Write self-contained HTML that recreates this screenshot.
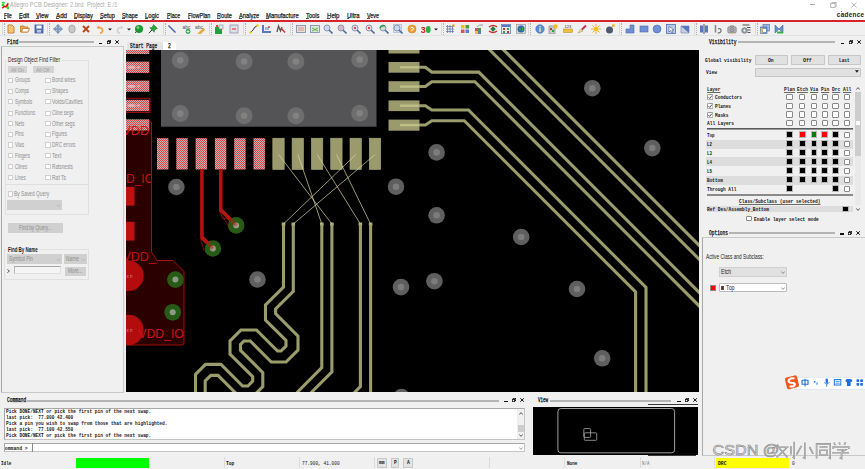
<!DOCTYPE html>
<html><head><meta charset="utf-8"><style>
*{margin:0;padding:0;box-sizing:border-box}
html,body{width:865px;height:469px;overflow:hidden;background:#f0f0f0;font-family:"Liberation Sans",sans-serif;position:relative}
.a{position:absolute}
.t{position:absolute;white-space:nowrap;line-height:1}
.mono{font-family:"Liberation Mono",monospace}
.serif{font-family:"Liberation Serif",serif}
.groove{position:absolute;height:3px;border-top:1px solid #a8a8a8;border-bottom:1px solid #fff;background:#d4d4d4}
.cb{position:absolute;width:6px;height:6px;border:1px solid #b4b4b4;background:#fff}
.btn{position:absolute;background:#dcdcdc;border:1px solid #c8c8c8}
</style></head>
<body>
<div class="a" style="left:0;top:0;width:865px;height:20px;background:#fff"></div>
<svg class="a" style="left:0.5px;top:1px" width="8.5" height="8.5" viewBox="0 0 8.5 8.5"><ellipse cx="2.3" cy="1.8" rx="1.6" ry="1" fill="#20e020"/><ellipse cx="2" cy="4" rx="1.4" ry="1.2" fill="#20e020"/><ellipse cx="7" cy="6.8" rx="1.3" ry="1.5" fill="#20e020"/><ellipse cx="6.5" cy="4.5" rx="1" ry="1.2" fill="#20e020"/><path d="M1.3 7.3L3.2 5.3L5 5.8L7.3 2.3" stroke="#e01010" stroke-width="1.6" fill="none"/></svg>
<svg class="a" style="left:10.40px;top:-2.00px;overflow:visible" width="77.4" height="12"><text x="0" y="9" font-size="6.6" font-family="Liberation Sans" fill="#ababab" textLength="73.40" lengthAdjust="spacingAndGlyphs" style="white-space:pre">Allegro PCB Designer: 2.brd</text></svg>
<svg class="a" style="left:87.40px;top:-2.00px;overflow:visible" width="34.4" height="12"><text x="0" y="9" font-size="6.6" font-family="Liberation Sans" fill="#ababab" textLength="30.40" lengthAdjust="spacingAndGlyphs" style="white-space:pre">Project: E:/1</text></svg>
<div class="a" style="left:810.2px;top:4.3px;width:4.8px;height:0.8px;background:#a8a8a8"></div>
<svg class="a" style="left:829.5px;top:1.8px" width="7" height="6" viewBox="0 0 7 6"><path d="M1.8 1.3V0.5H6.2V4.5H5.3" stroke="#a8a8a8" stroke-width="0.8" fill="none"/><rect x="0.7" y="1.5" width="4.4" height="4" fill="none" stroke="#a8a8a8" stroke-width="0.8"/></svg>
<svg class="a" style="left:850.5px;top:1.8px" width="6" height="6" viewBox="0 0 6 6"><path d="M0.5 0.5L5.5 5.5M5.5 0.5L0.5 5.5" stroke="#a8a8a8" stroke-width="0.8"/></svg>
<svg class="a" style="left:836px;top:9px;overflow:visible" width="28" height="10"><text x="0.8" y="7.6" font-size="6.4" font-family="Liberation Sans" font-weight="bold" fill="#1c1c1c" letter-spacing="0.3">cadence</text></svg>
<div class="a" style="left:841px;top:11.2px;width:1.4px;height:1.2px;background:#e83040"></div>
<svg class="a" style="left:3.90px;top:9.00px;overflow:visible" width="11.7" height="12"><text x="0" y="9" font-size="7.0" font-family="Liberation Sans" stroke="#1a1a1a" stroke-width="0.25" fill="#1a1a1a" textLength="7.70" lengthAdjust="spacingAndGlyphs" style="white-space:pre">File</text></svg>
<div class="a" style="left:3.9px;top:18.3px;width:2.0px;height:0.7px;background:#555"></div>
<svg class="a" style="left:19.20px;top:9.00px;overflow:visible" width="14.2" height="12"><text x="0" y="9" font-size="7.0" font-family="Liberation Sans" stroke="#1a1a1a" stroke-width="0.25" fill="#1a1a1a" textLength="10.20" lengthAdjust="spacingAndGlyphs" style="white-space:pre">Edit</text></svg>
<div class="a" style="left:19.2px;top:18.3px;width:2.7px;height:0.7px;background:#555"></div>
<svg class="a" style="left:36.30px;top:9.00px;overflow:visible" width="16.3" height="12"><text x="0" y="9" font-size="7.0" font-family="Liberation Sans" stroke="#1a1a1a" stroke-width="0.25" fill="#1a1a1a" textLength="12.30" lengthAdjust="spacingAndGlyphs" style="white-space:pre">View</text></svg>
<div class="a" style="left:36.3px;top:18.3px;width:3.2px;height:0.7px;background:#555"></div>
<svg class="a" style="left:55.50px;top:9.00px;overflow:visible" width="15.1" height="12"><text x="0" y="9" font-size="7.0" font-family="Liberation Sans" stroke="#1a1a1a" stroke-width="0.25" fill="#1a1a1a" textLength="11.10" lengthAdjust="spacingAndGlyphs" style="white-space:pre">Add</text></svg>
<div class="a" style="left:55.5px;top:18.3px;width:3.9px;height:0.7px;background:#555"></div>
<svg class="a" style="left:73.90px;top:9.00px;overflow:visible" width="22.9" height="12"><text x="0" y="9" font-size="7.0" font-family="Liberation Sans" stroke="#1a1a1a" stroke-width="0.25" fill="#1a1a1a" textLength="18.90" lengthAdjust="spacingAndGlyphs" style="white-space:pre">Display</text></svg>
<div class="a" style="left:73.9px;top:18.3px;width:2.8px;height:0.7px;background:#555"></div>
<svg class="a" style="left:99.80px;top:9.00px;overflow:visible" width="18.8" height="12"><text x="0" y="9" font-size="7.0" font-family="Liberation Sans" stroke="#1a1a1a" stroke-width="0.25" fill="#1a1a1a" textLength="14.80" lengthAdjust="spacingAndGlyphs" style="white-space:pre">Setup</text></svg>
<div class="a" style="left:99.8px;top:18.3px;width:3.1px;height:0.7px;background:#555"></div>
<svg class="a" style="left:122.00px;top:9.00px;overflow:visible" width="19.7" height="12"><text x="0" y="9" font-size="7.0" font-family="Liberation Sans" stroke="#1a1a1a" stroke-width="0.25" fill="#1a1a1a" textLength="15.70" lengthAdjust="spacingAndGlyphs" style="white-space:pre">Shape</text></svg>
<div class="a" style="left:122.0px;top:18.3px;width:3.3px;height:0.7px;background:#555"></div>
<svg class="a" style="left:145.20px;top:9.00px;overflow:visible" width="17.9" height="12"><text x="0" y="9" font-size="7.0" font-family="Liberation Sans" stroke="#1a1a1a" stroke-width="0.25" fill="#1a1a1a" textLength="13.90" lengthAdjust="spacingAndGlyphs" style="white-space:pre">Logic</text></svg>
<div class="a" style="left:145.2px;top:18.3px;width:2.9px;height:0.7px;background:#555"></div>
<svg class="a" style="left:166.80px;top:9.00px;overflow:visible" width="17.1" height="12"><text x="0" y="9" font-size="7.0" font-family="Liberation Sans" stroke="#1a1a1a" stroke-width="0.25" fill="#1a1a1a" textLength="13.10" lengthAdjust="spacingAndGlyphs" style="white-space:pre">Place</text></svg>
<div class="a" style="left:166.8px;top:18.3px;width:2.8px;height:0.7px;background:#555"></div>
<svg class="a" style="left:187.60px;top:9.00px;overflow:visible" width="26.4" height="12"><text x="0" y="9" font-size="7.0" font-family="Liberation Sans" stroke="#1a1a1a" stroke-width="0.25" fill="#1a1a1a" textLength="22.40" lengthAdjust="spacingAndGlyphs" style="white-space:pre">FlowPlan</text></svg>
<div class="a" style="left:187.6px;top:18.3px;width:2.9px;height:0.7px;background:#555"></div>
<svg class="a" style="left:216.90px;top:9.00px;overflow:visible" width="19.0" height="12"><text x="0" y="9" font-size="7.0" font-family="Liberation Sans" stroke="#1a1a1a" stroke-width="0.25" fill="#1a1a1a" textLength="15.00" lengthAdjust="spacingAndGlyphs" style="white-space:pre">Route</text></svg>
<div class="a" style="left:216.9px;top:18.3px;width:3.2px;height:0.7px;background:#555"></div>
<svg class="a" style="left:238.90px;top:9.00px;overflow:visible" width="24.3" height="12"><text x="0" y="9" font-size="7.0" font-family="Liberation Sans" stroke="#1a1a1a" stroke-width="0.25" fill="#1a1a1a" textLength="20.30" lengthAdjust="spacingAndGlyphs" style="white-space:pre">Analyze</text></svg>
<div class="a" style="left:238.9px;top:18.3px;width:3.0px;height:0.7px;background:#555"></div>
<svg class="a" style="left:266.10px;top:9.00px;overflow:visible" width="36.7" height="12"><text x="0" y="9" font-size="7.0" font-family="Liberation Sans" stroke="#1a1a1a" stroke-width="0.25" fill="#1a1a1a" textLength="32.70" lengthAdjust="spacingAndGlyphs" style="white-space:pre">Manufacture</text></svg>
<div class="a" style="left:266.1px;top:18.3px;width:3.1px;height:0.7px;background:#555"></div>
<svg class="a" style="left:306.20px;top:9.00px;overflow:visible" width="17.5" height="12"><text x="0" y="9" font-size="7.0" font-family="Liberation Sans" stroke="#1a1a1a" stroke-width="0.25" fill="#1a1a1a" textLength="13.50" lengthAdjust="spacingAndGlyphs" style="white-space:pre">Tools</text></svg>
<div class="a" style="left:306.2px;top:18.3px;width:2.8px;height:0.7px;background:#555"></div>
<svg class="a" style="left:326.60px;top:9.00px;overflow:visible" width="16.5" height="12"><text x="0" y="9" font-size="7.0" font-family="Liberation Sans" stroke="#1a1a1a" stroke-width="0.25" fill="#1a1a1a" textLength="12.50" lengthAdjust="spacingAndGlyphs" style="white-space:pre">Help</text></svg>
<div class="a" style="left:326.6px;top:18.3px;width:3.3px;height:0.7px;background:#555"></div>
<svg class="a" style="left:346.50px;top:9.00px;overflow:visible" width="16.6" height="12"><text x="0" y="9" font-size="7.0" font-family="Liberation Sans" stroke="#1a1a1a" stroke-width="0.25" fill="#1a1a1a" textLength="12.60" lengthAdjust="spacingAndGlyphs" style="white-space:pre">Ultra</text></svg>
<div class="a" style="left:346.5px;top:18.3px;width:2.6px;height:0.7px;background:#555"></div>
<svg class="a" style="left:366.50px;top:9.00px;overflow:visible" width="15.9" height="12"><text x="0" y="9" font-size="7.0" font-family="Liberation Sans" stroke="#1a1a1a" stroke-width="0.25" fill="#1a1a1a" textLength="11.90" lengthAdjust="spacingAndGlyphs" style="white-space:pre">Veve</text></svg>
<div class="a" style="left:366.5px;top:18.3px;width:3.1px;height:0.7px;background:#555"></div>
<div class="a" style="left:0;top:19.8px;width:865px;height:1.8px;background:#d8252a"></div>
<div class="a" style="left:0;top:35px;width:865px;height:1px;background:#e2e2e2"></div>
<div class="a" style="left:2px;top:23px;width:1px;height:12px;background:#dadada"></div><div class="a" style="left:4px;top:23px;width:1px;height:12px;border-left:1px dotted #b0b0b0"></div>
<div class="a" style="left:47px;top:23px;width:1px;height:12px;background:#dadada"></div><div class="a" style="left:49px;top:23px;width:1px;height:12px;border-left:1px dotted #b0b0b0"></div>
<div class="a" style="left:162.5px;top:23px;width:1px;height:12px;background:#dadada"></div><div class="a" style="left:164.5px;top:23px;width:1px;height:12px;border-left:1px dotted #b0b0b0"></div>
<div class="a" style="left:208.5px;top:23px;width:1px;height:12px;background:#dadada"></div><div class="a" style="left:210.5px;top:23px;width:1px;height:12px;border-left:1px dotted #b0b0b0"></div>
<div class="a" style="left:243px;top:23px;width:1px;height:12px;background:#dadada"></div><div class="a" style="left:245px;top:23px;width:1px;height:12px;border-left:1px dotted #b0b0b0"></div>
<div class="a" style="left:290px;top:23px;width:1px;height:12px;background:#dadada"></div><div class="a" style="left:292px;top:23px;width:1px;height:12px;border-left:1px dotted #b0b0b0"></div>
<div class="a" style="left:441px;top:23px;width:1px;height:12px;background:#dadada"></div><div class="a" style="left:443px;top:23px;width:1px;height:12px;border-left:1px dotted #b0b0b0"></div>
<div class="a" style="left:528px;top:23px;width:1px;height:12px;background:#dadada"></div><div class="a" style="left:530px;top:23px;width:1px;height:12px;border-left:1px dotted #b0b0b0"></div>
<div class="a" style="left:619px;top:23px;width:1px;height:12px;background:#dadada"></div><div class="a" style="left:621px;top:23px;width:1px;height:12px;border-left:1px dotted #b0b0b0"></div>
<div class="a" style="left:693.5px;top:23px;width:1px;height:12px;background:#dadada"></div><div class="a" style="left:695.5px;top:23px;width:1px;height:12px;border-left:1px dotted #b0b0b0"></div>
<div class="a" style="left:754.5px;top:23px;width:1px;height:12px;background:#dadada"></div><div class="a" style="left:756.5px;top:23px;width:1px;height:12px;border-left:1px dotted #b0b0b0"></div>
<svg class="a" style="left:5.8px;top:24px" width="10" height="10" viewBox="0 0 10 10"><path d="M2 1H6L8 3V9H2Z" fill="#f0c878" stroke="#c88838" stroke-width="1"/></svg>
<svg class="a" style="left:20.1px;top:24px" width="10" height="10" viewBox="0 0 10 10"><path d="M0.5 2H4L5 3H8V8H0.5Z" fill="#e8a850" stroke="#c07828" stroke-width="0.8"/><path d="M1.5 8L3 4.5H9.5L8 8Z" fill="#fff" stroke="#c07828" stroke-width="0.8"/></svg>
<svg class="a" style="left:34.0px;top:24px" width="10" height="10" viewBox="0 0 10 10"><rect x="1" y="1" width="8" height="8" fill="#5a78c0" stroke="#3a58a0" stroke-width="0.8"/><rect x="2.5" y="1.5" width="5" height="3" fill="#fff"/><rect x="3" y="6" width="4" height="2.5" fill="#c0c8e0"/></svg>
<svg class="a" style="left:53.1px;top:24px" width="10" height="10" viewBox="0 0 10 10"><path d="M5 0.3L7 2.6H5.8V4.2H7.4V3L9.7 5L7.4 7V5.8H5.8V7.4H7L5 9.7L3 7.4H4.2V5.8H2.6V7L0.3 5L2.6 3V4.2H4.2V2.6H3Z" fill="#7898c0" stroke="#5a7aa0" stroke-width="0.4"/></svg>
<svg class="a" style="left:67.0px;top:24px" width="10" height="10" viewBox="0 0 10 10"><ellipse cx="5" cy="5" rx="3.2" ry="4" fill="#c8c8c8" stroke="#a0a0a0" stroke-width="0.8"/></svg>
<svg class="a" style="left:80.8px;top:24px" width="10" height="10" viewBox="0 0 10 10"><path d="M2 2L8 8M8 2L2 8" stroke="#b84818" stroke-width="2"/></svg>
<svg class="a" style="left:94.7px;top:24px" width="10" height="10" viewBox="0 0 10 10"><path d="M3.5 3.5Q7.5 3.5 7.5 6.3Q7.5 8.8 5 9.3" stroke="#f0a040" stroke-width="1.6" fill="none"/><path d="M1.5 3.5L4.3 1.5V5.5Z" fill="#f0a040"/></svg>
<svg class="a" style="left:105.0px;top:24px" width="10" height="10" viewBox="0 0 10 10"><path d="M3 4.5H7L5 6.5Z" fill="#222"/></svg>
<svg class="a" style="left:114.6px;top:24px" width="10" height="10" viewBox="0 0 10 10"><path d="M6.5 3.5Q2.5 3.5 2.5 6.3Q2.5 8.8 5 9.3" stroke="#d0d0d0" stroke-width="1.6" fill="none"/><path d="M8.5 3.5L5.7 1.5V5.5Z" fill="#d0d0d0"/></svg>
<svg class="a" style="left:124.2px;top:24px" width="10" height="10" viewBox="0 0 10 10"><path d="M3 4.5H7L5 6.5Z" fill="#222"/></svg>
<svg class="a" style="left:133.7px;top:24px" width="10" height="10" viewBox="0 0 10 10"><circle cx="5" cy="5" r="4" fill="#1a9a30"/><circle cx="4" cy="3.5" r="1.5" fill="#70d070"/><path d="M1 9L3 7" stroke="#555" stroke-width="1"/></svg>
<svg class="a" style="left:148.0px;top:24px" width="10" height="10" viewBox="0 0 10 10"><path d="M5.5 0.5L9.5 4.5L8 5L6.5 6.5L6.3 8.3L1.7 3.7L3.5 3.5L5 2Z" fill="#30a040" stroke="#1a7a2a" stroke-width="0.5"/><path d="M4 6L0.8 9.2" stroke="#333" stroke-width="1"/></svg>
<svg class="a" style="left:167.1px;top:24px" width="10" height="10" viewBox="0 0 10 10"><path d="M1.5 1.5L8.5 8.5" stroke="#4868a8" stroke-width="1.5"/></svg>
<svg class="a" style="left:181.8px;top:24px" width="10" height="10" viewBox="0 0 10 10"><text x="0.5" y="4.5" font-size="5" fill="#505050" font-family="Liberation Sans">abc</text><circle cx="6" cy="7.5" r="2.4" fill="#20a040"/><path d="M6 6V9M4.5 7.5H7.5" stroke="#fff" stroke-width="0.8"/></svg>
<svg class="a" style="left:194.8px;top:24px" width="10" height="10" viewBox="0 0 10 10"><text x="0" y="4.5" font-size="5" fill="#505050" font-family="Liberation Sans">abc</text><path d="M3 9.5L8.3 4.2L9.8 5.7L4.5 11Z" fill="#f0b030" stroke="#c07020" stroke-width="0.4"/></svg>
<svg class="a" style="left:213.9px;top:24px" width="10" height="10" viewBox="0 0 10 10"><rect x="1" y="3" width="7" height="7" fill="#20a040"/><rect x="5" y="1" width="4" height="4" fill="#e8e8e8" stroke="#888" stroke-width="0.6"/><rect x="2" y="1" width="2" height="2" fill="#e04040"/></svg>
<svg class="a" style="left:228.6px;top:24px" width="10" height="10" viewBox="0 0 10 10"><rect x="1" y="1" width="8" height="8" fill="#e0e0e8" stroke="#9090b0" stroke-width="0.8"/><rect x="3" y="4" width="4" height="2" fill="#e08080"/></svg>
<svg class="a" style="left:248.6px;top:24px" width="10" height="10" viewBox="0 0 10 10"><path d="M1.5 8.5L4 6L6 3L8.5 1.5" stroke="#333" stroke-width="1" fill="none"/><circle cx="1.5" cy="8.5" r="1.3" fill="#e8d020"/><circle cx="8.5" cy="1.5" r="1.3" fill="#e8d020"/></svg>
<svg class="a" style="left:261.6px;top:24px" width="10" height="10" viewBox="0 0 10 10"><path d="M1 1V8H9" stroke="#5878c0" stroke-width="2" fill="none"/><rect x="3" y="3" width="4" height="3" fill="#a0b8e0"/><circle cx="7" cy="3" r="1" fill="#e04040"/></svg>
<svg class="a" style="left:276.3px;top:24px" width="10" height="10" viewBox="0 0 10 10"><path d="M1 8L2.5 2L4.5 7L6 3" stroke="#555" stroke-width="1.3" fill="none"/><path d="M5 4L9 8.5" stroke="#d03030" stroke-width="1.5"/></svg>
<svg class="a" style="left:295.6px;top:24px" width="10" height="10" viewBox="0 0 10 10"><rect x="0.5" y="1.5" width="9" height="7" fill="#e8e0d8" stroke="#7888a8" stroke-width="0.8"/><path d="M2 4H8M2 6H8" stroke="#d07070" stroke-width="0.7"/></svg>
<svg class="a" style="left:309.5px;top:24px" width="10" height="10" viewBox="0 0 10 10"><rect x="0.5" y="1.5" width="9" height="7" fill="#d8e8d0" stroke="#7888a8" stroke-width="0.8"/><path d="M2 4L8 7M2 7L8 4" stroke="#40a040" stroke-width="0.8"/></svg>
<svg class="a" style="left:323.3px;top:24px" width="10" height="10" viewBox="0 0 10 10"><circle cx="4" cy="4" r="3" fill="#c8d8f0" stroke="#8090b0" stroke-width="0.9"/><path d="M6 6L9.5 9.5" stroke="#5070a0" stroke-width="1.6"/></svg>
<svg class="a" style="left:337.2px;top:24px" width="10" height="10" viewBox="0 0 10 10"><circle cx="4" cy="4" r="3" fill="#d8b8c8" stroke="#8090b0" stroke-width="0.9"/><path d="M6 6L9.5 9.5" stroke="#5070a0" stroke-width="1.6"/></svg>
<svg class="a" style="left:351.1px;top:24px" width="10" height="10" viewBox="0 0 10 10"><circle cx="4" cy="4" r="3" fill="#e8d8e0" stroke="#8090b0" stroke-width="0.9"/><path d="M6 6L9.5 9.5" stroke="#5070a0" stroke-width="1.6"/><circle cx="4" cy="4" r="1" fill="#d02020"/></svg>
<svg class="a" style="left:365.0px;top:24px" width="10" height="10" viewBox="0 0 10 10"><circle cx="4" cy="4" r="3" fill="#e8d8e0" stroke="#8090b0" stroke-width="0.9"/><path d="M6 6L9.5 9.5" stroke="#5070a0" stroke-width="1.6"/><circle cx="4" cy="4" r="1" fill="#d02020"/></svg>
<svg class="a" style="left:378.8px;top:24px" width="10" height="10" viewBox="0 0 10 10"><circle cx="4" cy="4" r="3" fill="#d0d8d0" stroke="#8090b0" stroke-width="0.9"/><path d="M6 6L9.5 9.5" stroke="#5070a0" stroke-width="1.6"/><path d="M1 4Q2 1 6 2" stroke="#20a040" stroke-width="1.4" fill="none"/></svg>
<svg class="a" style="left:392.7px;top:24px" width="10" height="10" viewBox="0 0 10 10"><rect x="0.5" y="0.5" width="8" height="8" fill="#dde4f0" stroke="#7890b8" stroke-width="0.8" stroke-dasharray="1 1"/><circle cx="4" cy="4" r="3" fill="#c8d8f0" stroke="#8090b0" stroke-width="0.9"/><path d="M6 6L9.5 9.5" stroke="#5070a0" stroke-width="1.6"/></svg>
<svg class="a" style="left:406.6px;top:24px" width="10" height="10" viewBox="0 0 10 10"><circle cx="5" cy="5" r="4" fill="#f0a030" stroke="#d08020" stroke-width="0.6"/><path d="M3.5 4Q5 2.5 6.5 4Q6.5 6.5 4 6.5" stroke="#fff" stroke-width="1" fill="none"/></svg>
<svg class="a" style="left:421.3px;top:24px" width="10" height="10" viewBox="0 0 10 10"><text x="-0.5" y="9" font-size="9.5" font-weight="bold" fill="#d02020" font-family="Liberation Sans">3</text><rect x="5" y="2" width="4.5" height="7" rx="2" fill="#30b040"/></svg>
<svg class="a" style="left:431.1px;top:24px" width="10" height="10" viewBox="0 0 10 10"><path d="M3 4.5H7L5 6.5Z" fill="#222"/></svg>
<svg class="a" style="left:445.0px;top:24px" width="10" height="10" viewBox="0 0 10 10"><path d="M1 2.5H9M1 5H9M1 7.5H9M2.5 1V9M5 1V9M7.5 1V9" stroke="#6878b8" stroke-width="0.8"/><circle cx="8.5" cy="1.5" r="1.3" fill="#f0a030"/></svg>
<svg class="a" style="left:459.7px;top:24px" width="10" height="10" viewBox="0 0 10 10"><rect x="1" y="1" width="3.5" height="3.5" fill="#f0c020"/><rect x="5.5" y="1" width="3.5" height="3.5" fill="#40a040"/><rect x="1" y="5.5" width="3.5" height="3.5" fill="#e05050"/><rect x="5.5" y="5.5" width="3.5" height="3.5" fill="#5080d0"/></svg>
<svg class="a" style="left:473.6px;top:24px" width="10" height="10" viewBox="0 0 10 10"><rect x="1" y="4" width="3" height="3" fill="#e05050"/><rect x="4" y="4" width="3" height="3" fill="#40a040"/><rect x="1" y="7" width="3" height="3" fill="#f0c020"/><rect x="4" y="7" width="3" height="3" fill="#5080d0"/><path d="M3 3Q5 0 9 1" stroke="#999" stroke-width="1" fill="none"/></svg>
<svg class="a" style="left:488.3px;top:24px" width="10" height="10" viewBox="0 0 10 10"><path d="M1 3Q5 0 9 3M1 7Q5 10 9 7" stroke="#d03030" stroke-width="1.5" fill="none"/><rect x="3" y="3" width="4" height="4" fill="#208040" transform="rotate(45 5 5)"/></svg>
<svg class="a" style="left:501.3px;top:24px" width="10" height="10" viewBox="0 0 10 10"><rect x="0.5" y="0.5" width="9" height="9" fill="#e8e8e8" stroke="#6880b0" stroke-width="0.8"/><rect x="1" y="1" width="8" height="2" fill="#5878c0"/><rect x="2" y="4" width="2" height="2" fill="#d03030"/><rect x="6" y="4" width="2" height="2" fill="#30a040"/><rect x="2" y="7" width="2" height="2" fill="#30a040"/><rect x="6" y="7" width="2" height="2" fill="#d03030"/></svg>
<svg class="a" style="left:516.0px;top:24px" width="10" height="10" viewBox="0 0 10 10"><rect x="0.5" y="0.5" width="9" height="9" fill="#d8d8d8" stroke="#909090" stroke-width="0.6"/><circle cx="5" cy="5" r="3.5" fill="#2868b0"/><path d="M3 3.5Q5 4 4 6.5M6 3Q7 5 6.5 7" stroke="#40b040" stroke-width="1" fill="none"/></svg>
<svg class="a" style="left:535.1px;top:24px" width="10" height="10" viewBox="0 0 10 10"><circle cx="5" cy="5" r="4.2" fill="#5890d8" stroke="#3868b0" stroke-width="0.6"/><rect x="4.3" y="4" width="1.4" height="4" fill="#f0e8a0"/><circle cx="5" cy="2.7" r="0.8" fill="#f0e8a0"/></svg>
<svg class="a" style="left:548.1px;top:24px" width="10" height="10" viewBox="0 0 10 10"><rect x="1" y="2" width="6" height="8" fill="#c8c8c8" stroke="#808080" stroke-width="0.6"/><rect x="2" y="4" width="2" height="2" fill="#d03030"/><rect x="4" y="6" width="2" height="2" fill="#30a040"/><circle cx="7.5" cy="2.5" r="2.2" fill="#f0c020"/></svg>
<svg class="a" style="left:562.9px;top:24px" width="10" height="10" viewBox="0 0 10 10"><text x="1.5" y="4" font-size="4" fill="#333" font-family="Liberation Sans">123</text><rect x="0.5" y="5" width="9" height="3.5" fill="#f0c040" stroke="#b08020" stroke-width="0.5"/></svg>
<svg class="a" style="left:576.9px;top:24px" width="10" height="10" viewBox="0 0 10 10"><path d="M1 9L4 5L6 7Z" fill="#f0e0a0" stroke="#a08040" stroke-width="0.5"/><path d="M5 5.5L9 1.5" stroke="#c03050" stroke-width="2"/></svg>
<svg class="a" style="left:590.8px;top:24px" width="10" height="10" viewBox="0 0 10 10"><circle cx="5" cy="5" r="2.5" fill="#f0c020"/><path d="M5 0V2M5 8V10M0 5H2M8 5H10M1.5 1.5L3 3M7 7L8.5 8.5M8.5 1.5L7 3M3 7L1.5 8.5" stroke="#e8a020" stroke-width="0.9"/></svg>
<svg class="a" style="left:604.7px;top:24px" width="10" height="10" viewBox="0 0 10 10"><circle cx="4.5" cy="6" r="3.5" fill="#505870"/><path d="M7 3L8 1" stroke="#888" stroke-width="1"/><circle cx="8.5" cy="1.5" r="1.5" fill="#f0c020"/></svg>
<svg class="a" style="left:624.6px;top:24px" width="10" height="10" viewBox="0 0 10 10"><path d="M1 9V5H5V1H9V9Z" fill="#6f90d4" stroke="#4a6ab0" stroke-width="0.6"/></svg>
<svg class="a" style="left:638.5px;top:24px" width="10" height="10" viewBox="0 0 10 10"><rect x="1" y="2" width="8" height="6" fill="#6f90d4" stroke="#4a6ab0" stroke-width="0.6"/></svg>
<svg class="a" style="left:652.4px;top:24px" width="10" height="10" viewBox="0 0 10 10"><circle cx="5" cy="5" r="4" fill="#6f90d4" stroke="#4a6ab0" stroke-width="0.6"/></svg>
<svg class="a" style="left:666.2px;top:24px" width="10" height="10" viewBox="0 0 10 10"><rect x="0.5" y="0.5" width="9" height="9" fill="#b8c8e8" stroke="#5070b0" stroke-width="0.8"/><path d="M3 2.5L3 8L4.5 6.5L6 9L7 8.5L5.8 6H8Z" fill="#fff" stroke="#304070" stroke-width="0.5"/></svg>
<svg class="a" style="left:680.1px;top:24px" width="10" height="10" viewBox="0 0 10 10"><path d="M1 2H9V9H1Z" fill="#c8d0e0" stroke="#6878a8" stroke-width="0.6"/><path d="M1 2L9 9V2Z" fill="#5878c0"/></svg>
<svg class="a" style="left:699.2px;top:24px" width="10" height="10" viewBox="0 0 10 10"><rect x="1" y="1.5" width="8" height="7" fill="#5878c0"/><rect x="4" y="0" width="2" height="10" fill="#a0a0a0"/></svg>
<svg class="a" style="left:713.1px;top:24px" width="10" height="10" viewBox="0 0 10 10"><path d="M2.5 1V8.5" stroke="#8a8a8a" stroke-width="1.6" fill="none"/><path d="M4.5 9Q8.5 9 8 6Q7.5 4 5 5" stroke="#707070" stroke-width="1.2" fill="none"/></svg>
<svg class="a" style="left:727.3px;top:24px" width="10" height="10" viewBox="0 0 10 10"><rect x="0.8" y="2.8" width="8.4" height="6.2" rx="1.2" fill="#b4b4b4" stroke="#707070" stroke-width="0.6"/><rect x="3" y="1.5" width="4" height="1.5" fill="#909090"/><circle cx="5" cy="5.9" r="1.9" fill="#e8e8e8" stroke="#505050" stroke-width="0.6"/><circle cx="5" cy="5.9" r="0.8" fill="#3060c0"/></svg>
<svg class="a" style="left:741.2px;top:24px" width="10" height="10" viewBox="0 0 10 10"><path d="M1.5 1H8.5M6 3.5H9.5M6.5 6H9.5M6.5 8.5H9.5" stroke="#404040" stroke-width="0.9"/><circle cx="3.5" cy="6.5" r="2.8" fill="#9aa0aa" stroke="#606a78" stroke-width="0.6"/><circle cx="3.5" cy="6.5" r="1" fill="#fff"/></svg>
<svg class="a" style="left:760.3px;top:24px" width="10" height="10" viewBox="0 0 10 10"><rect x="3" y="0.5" width="6.5" height="6.5" fill="#a0b8e0" stroke="#4868a0" stroke-width="0.6"/><rect x="0.5" y="3" width="6.5" height="6.5" fill="#7898c8" stroke="#4868a0" stroke-width="0.6"/><rect x="0.8" y="4" width="1.8" height="5.3" fill="#e8c050"/><rect x="3" y="5" width="3" height="3" fill="#fff"/></svg>
<svg class="a" style="left:774.2px;top:24px" width="10" height="10" viewBox="0 0 10 10"><path d="M1 1L5 5L1 9ZM9 1L5 5L9 9Z" fill="#6890c8" stroke="#4068a0" stroke-width="0.6"/><rect x="3" y="7.5" width="6" height="2" fill="#30b040"/></svg>
<svg class="a" style="left:6.80px;top:35.00px;overflow:visible" width="15.4" height="12"><text x="0" y="9" font-size="6.6" font-family="Liberation Mono" stroke="#0a0a0a" stroke-width="0.25" fill="#0a0a0a" textLength="11.40" lengthAdjust="spacingAndGlyphs" style="white-space:pre">Find</text></svg>
<div class="a" style="left:19.2px;top:41px;width:74.8px;height:2px;background:#b4b4b4"></div>
<div class="a" style="left:98.9px;top:42.7px;width:3.6px;height:1.3px;background:#111"></div>
<svg class="a" style="left:106.9px;top:39.9px" width="4" height="4" viewBox="0 0 4 4"><rect x="1.2" y="0.3" width="2.5" height="2.3" fill="none" stroke="#111" stroke-width="0.8"/><rect x="0.3" y="1.5" width="2.4" height="2.2" fill="#fff" stroke="#111" stroke-width="0.8"/></svg>
<svg class="a" style="left:114.9px;top:39.9px" width="4.2" height="4" viewBox="0 0 4.2 4"><path d="M0.3 0.3L3.9 3.7M3.9 0.3L0.3 3.7" stroke="#111" stroke-width="1"/></svg>
<div class="a" style="left:0.5px;top:46.3px;width:123.3px;height:347.2px;border:1px solid #c9c9c9;border-left-color:#a8a8a8"></div>
<div class="a" style="left:4.6px;top:59.7px;width:84px;height:155.6px;border:0.8px solid #e0e0e0"></div>
<div class="a" style="left:7px;top:57px;width:54px;height:5px;background:#f0f0f0"></div>
<svg class="a" style="left:8.10px;top:53.00px;overflow:visible" width="56.0" height="12"><text x="0" y="9" font-size="6.5" font-family="Liberation Sans" fill="#262626" textLength="52.00" lengthAdjust="spacingAndGlyphs" style="white-space:pre">Design Object Find Filter</text></svg>
<div class="a" style="left:7.8px;top:66.2px;width:19px;height:7px;background:#d4d4d4"></div>
<svg class="a" style="left:10.90px;top:64.00px;overflow:visible" width="17.0" height="11"><text x="0" y="8" font-size="6.0" font-family="Liberation Sans" fill="#9c9c9c" textLength="13.00" lengthAdjust="spacingAndGlyphs" style="white-space:pre">All On</text></svg>
<div class="a" style="left:33.1px;top:66.2px;width:20.8px;height:7px;background:#d4d4d4"></div>
<svg class="a" style="left:36.40px;top:64.00px;overflow:visible" width="17.5" height="11"><text x="0" y="8" font-size="6.0" font-family="Liberation Sans" fill="#9c9c9c" textLength="13.50" lengthAdjust="spacingAndGlyphs" style="white-space:pre">All Off</text></svg>
<div class="a" style="left:7.5px;top:77.60000000000001px;width:5.2px;height:5.2px;background:#fff;border:0.8px solid #cfcfcf"></div>
<div class="a" style="left:45.4px;top:77.60000000000001px;width:5.2px;height:5.2px;background:#fff;border:0.8px solid #cfcfcf"></div>
<svg class="a" style="left:14.70px;top:73.00px;overflow:visible" width="19.0" height="12"><text x="0" y="9" font-size="6.3" font-family="Liberation Sans" fill="#8e8e8e" textLength="15.00" lengthAdjust="spacingAndGlyphs" style="white-space:pre">Groups</text></svg>
<svg class="a" style="left:52.40px;top:73.00px;overflow:visible" width="27.3" height="12"><text x="0" y="9" font-size="6.3" font-family="Liberation Sans" fill="#8e8e8e" textLength="23.30" lengthAdjust="spacingAndGlyphs" style="white-space:pre">Bond wires</text></svg>
<div class="a" style="left:7.5px;top:88.5px;width:5.2px;height:5.2px;background:#fff;border:0.8px solid #cfcfcf"></div>
<div class="a" style="left:45.4px;top:88.5px;width:5.2px;height:5.2px;background:#fff;border:0.8px solid #cfcfcf"></div>
<svg class="a" style="left:14.70px;top:84.00px;overflow:visible" width="18.1" height="12"><text x="0" y="9" font-size="6.3" font-family="Liberation Sans" fill="#8e8e8e" textLength="14.10" lengthAdjust="spacingAndGlyphs" style="white-space:pre">Comps</text></svg>
<svg class="a" style="left:52.40px;top:84.00px;overflow:visible" width="20.0" height="12"><text x="0" y="9" font-size="6.3" font-family="Liberation Sans" fill="#8e8e8e" textLength="16.00" lengthAdjust="spacingAndGlyphs" style="white-space:pre">Shapes</text></svg>
<div class="a" style="left:7.5px;top:99.10000000000001px;width:5.2px;height:5.2px;background:#fff;border:0.8px solid #cfcfcf"></div>
<div class="a" style="left:45.4px;top:99.10000000000001px;width:5.2px;height:5.2px;background:#fff;border:0.8px solid #cfcfcf"></div>
<svg class="a" style="left:14.70px;top:95.00px;overflow:visible" width="21.3" height="12"><text x="0" y="9" font-size="6.3" font-family="Liberation Sans" fill="#8e8e8e" textLength="17.30" lengthAdjust="spacingAndGlyphs" style="white-space:pre">Symbols</text></svg>
<svg class="a" style="left:52.40px;top:95.00px;overflow:visible" width="34.7" height="12"><text x="0" y="9" font-size="6.3" font-family="Liberation Sans" fill="#8e8e8e" textLength="30.70" lengthAdjust="spacingAndGlyphs" style="white-space:pre">Voids/Cavities</text></svg>
<div class="a" style="left:7.5px;top:110.60000000000001px;width:5.2px;height:5.2px;background:#fff;border:0.8px solid #cfcfcf"></div>
<div class="a" style="left:45.4px;top:110.60000000000001px;width:5.2px;height:5.2px;background:#fff;border:0.8px solid #cfcfcf"></div>
<svg class="a" style="left:14.70px;top:106.00px;overflow:visible" width="24.1" height="12"><text x="0" y="9" font-size="6.3" font-family="Liberation Sans" fill="#8e8e8e" textLength="20.10" lengthAdjust="spacingAndGlyphs" style="white-space:pre">Functions</text></svg>
<svg class="a" style="left:52.40px;top:106.00px;overflow:visible" width="25.5" height="12"><text x="0" y="9" font-size="6.3" font-family="Liberation Sans" fill="#8e8e8e" textLength="21.50" lengthAdjust="spacingAndGlyphs" style="white-space:pre">Cline segs</text></svg>
<div class="a" style="left:7.5px;top:121.0px;width:5.2px;height:5.2px;background:#fff;border:0.8px solid #cfcfcf"></div>
<div class="a" style="left:45.4px;top:121.0px;width:5.2px;height:5.2px;background:#fff;border:0.8px solid #cfcfcf"></div>
<svg class="a" style="left:14.70px;top:117.00px;overflow:visible" width="13.3" height="12"><text x="0" y="9" font-size="6.3" font-family="Liberation Sans" fill="#8e8e8e" textLength="9.30" lengthAdjust="spacingAndGlyphs" style="white-space:pre">Nets</text></svg>
<svg class="a" style="left:52.40px;top:117.00px;overflow:visible" width="26.8" height="12"><text x="0" y="9" font-size="6.3" font-family="Liberation Sans" fill="#8e8e8e" textLength="22.80" lengthAdjust="spacingAndGlyphs" style="white-space:pre">Other segs</text></svg>
<div class="a" style="left:7.5px;top:131.6px;width:5.2px;height:5.2px;background:#fff;border:0.8px solid #cfcfcf"></div>
<div class="a" style="left:45.4px;top:131.6px;width:5.2px;height:5.2px;background:#fff;border:0.8px solid #cfcfcf"></div>
<svg class="a" style="left:14.70px;top:127.00px;overflow:visible" width="12.7" height="12"><text x="0" y="9" font-size="6.3" font-family="Liberation Sans" fill="#8e8e8e" textLength="8.70" lengthAdjust="spacingAndGlyphs" style="white-space:pre">Pins</text></svg>
<svg class="a" style="left:52.40px;top:127.00px;overflow:visible" width="19.0" height="12"><text x="0" y="9" font-size="6.3" font-family="Liberation Sans" fill="#8e8e8e" textLength="15.00" lengthAdjust="spacingAndGlyphs" style="white-space:pre">Figures</text></svg>
<div class="a" style="left:7.5px;top:142.4px;width:5.2px;height:5.2px;background:#fff;border:0.8px solid #cfcfcf"></div>
<div class="a" style="left:45.4px;top:142.4px;width:5.2px;height:5.2px;background:#fff;border:0.8px solid #cfcfcf"></div>
<svg class="a" style="left:14.70px;top:138.00px;overflow:visible" width="13.0" height="12"><text x="0" y="9" font-size="6.3" font-family="Liberation Sans" fill="#8e8e8e" textLength="9.00" lengthAdjust="spacingAndGlyphs" style="white-space:pre">Vias</text></svg>
<svg class="a" style="left:52.40px;top:138.00px;overflow:visible" width="27.3" height="12"><text x="0" y="9" font-size="6.3" font-family="Liberation Sans" fill="#8e8e8e" textLength="23.30" lengthAdjust="spacingAndGlyphs" style="white-space:pre">DRC errors</text></svg>
<div class="a" style="left:7.5px;top:153.3px;width:5.2px;height:5.2px;background:#fff;border:0.8px solid #cfcfcf"></div>
<div class="a" style="left:45.4px;top:153.3px;width:5.2px;height:5.2px;background:#fff;border:0.8px solid #cfcfcf"></div>
<svg class="a" style="left:14.70px;top:149.00px;overflow:visible" width="19.1" height="12"><text x="0" y="9" font-size="6.3" font-family="Liberation Sans" fill="#8e8e8e" textLength="15.10" lengthAdjust="spacingAndGlyphs" style="white-space:pre">Fingers</text></svg>
<svg class="a" style="left:52.40px;top:149.00px;overflow:visible" width="13.3" height="12"><text x="0" y="9" font-size="6.3" font-family="Liberation Sans" fill="#8e8e8e" textLength="9.30" lengthAdjust="spacingAndGlyphs" style="white-space:pre">Text</text></svg>
<div class="a" style="left:7.5px;top:164.1px;width:5.2px;height:5.2px;background:#fff;border:0.8px solid #cfcfcf"></div>
<div class="a" style="left:45.4px;top:164.1px;width:5.2px;height:5.2px;background:#fff;border:0.8px solid #cfcfcf"></div>
<svg class="a" style="left:14.70px;top:160.00px;overflow:visible" width="16.1" height="12"><text x="0" y="9" font-size="6.3" font-family="Liberation Sans" fill="#8e8e8e" textLength="12.10" lengthAdjust="spacingAndGlyphs" style="white-space:pre">Clines</text></svg>
<svg class="a" style="left:52.40px;top:160.00px;overflow:visible" width="24.9" height="12"><text x="0" y="9" font-size="6.3" font-family="Liberation Sans" fill="#8e8e8e" textLength="20.90" lengthAdjust="spacingAndGlyphs" style="white-space:pre">Ratsnests</text></svg>
<div class="a" style="left:7.5px;top:174.8px;width:5.2px;height:5.2px;background:#fff;border:0.8px solid #cfcfcf"></div>
<div class="a" style="left:45.4px;top:174.8px;width:5.2px;height:5.2px;background:#fff;border:0.8px solid #cfcfcf"></div>
<svg class="a" style="left:14.70px;top:171.00px;overflow:visible" width="14.9" height="12"><text x="0" y="9" font-size="6.3" font-family="Liberation Sans" fill="#8e8e8e" textLength="10.90" lengthAdjust="spacingAndGlyphs" style="white-space:pre">Lines</text></svg>
<svg class="a" style="left:52.40px;top:171.00px;overflow:visible" width="18.1" height="12"><text x="0" y="9" font-size="6.3" font-family="Liberation Sans" fill="#8e8e8e" textLength="14.10" lengthAdjust="spacingAndGlyphs" style="white-space:pre">Rat Ts</text></svg>
<div class="a" style="left:4.6px;top:184.1px;width:84px;height:0.8px;background:#dedede"></div>
<div class="a" style="left:7.6px;top:191.4px;width:5.2px;height:5.2px;background:#fff;border:0.8px solid #cfcfcf"></div>
<svg class="a" style="left:14.30px;top:187.00px;overflow:visible" width="39.2" height="12"><text x="0" y="9" font-size="6.3" font-family="Liberation Sans" fill="#8e8e8e" textLength="35.20" lengthAdjust="spacingAndGlyphs" style="white-space:pre">By Saved Query</text></svg>
<div class="a" style="left:7.3px;top:200.3px;width:54.7px;height:9.3px;background:#d0d0d0"></div>
<svg class="a" style="left:55.7px;top:203.5px" width="5" height="3.5" viewBox="0 0 5 3.5"><path d="M0.4 0.6L2.5 2.8L4.6 0.6" stroke="#a8a8a8" stroke-width="0.6" fill="none"/></svg>
<div class="a" style="left:8px;top:223.1px;width:55.4px;height:9.8px;background:#d0d0d0"></div>
<svg class="a" style="left:19.00px;top:221.00px;overflow:visible" width="36.6" height="12"><text x="0" y="9" font-size="6.3" font-family="Liberation Sans" fill="#8e8e8e" textLength="32.60" lengthAdjust="spacingAndGlyphs" style="white-space:pre">Find by Query...</text></svg>
<div class="a" style="left:4.4px;top:249.2px;width:84.6px;height:30.9px;border:0.8px solid #e0e0e0"></div>
<div class="a" style="left:7px;top:247px;width:32px;height:5px;background:#f0f0f0"></div>
<svg class="a" style="left:8.10px;top:243.00px;overflow:visible" width="33.6" height="12"><text x="0" y="9" font-size="6.5" font-family="Liberation Sans" font-weight="bold" fill="#1a1a1a" textLength="29.60" lengthAdjust="spacingAndGlyphs" style="white-space:pre">Find By Name</text></svg>
<div class="a" style="left:7.1px;top:254.3px;width:54.8px;height:9.4px;background:#d0d0d0"></div>
<svg class="a" style="left:8.80px;top:252.00px;overflow:visible" width="28.0" height="12"><text x="0" y="9" font-size="6.3" font-family="Liberation Sans" fill="#8e8e8e" textLength="24.00" lengthAdjust="spacingAndGlyphs" style="white-space:pre">Symbol Pin</text></svg>
<svg class="a" style="left:55.5px;top:257.5px" width="5" height="3.5" viewBox="0 0 5 3.5"><path d="M0.4 0.6L2.5 2.8L4.6 0.6" stroke="#a8a8a8" stroke-width="0.6" fill="none"/></svg>
<div class="a" style="left:64.3px;top:254.3px;width:22.6px;height:9.4px;background:#d0d0d0"></div>
<svg class="a" style="left:65.80px;top:252.00px;overflow:visible" width="16.8" height="12"><text x="0" y="9" font-size="6.3" font-family="Liberation Sans" fill="#8e8e8e" textLength="12.80" lengthAdjust="spacingAndGlyphs" style="white-space:pre">Name</text></svg>
<svg class="a" style="left:81px;top:257.5px" width="5" height="3.5" viewBox="0 0 5 3.5"><path d="M0.4 0.6L2.5 2.8L4.6 0.6" stroke="#a8a8a8" stroke-width="0.6" fill="none"/></svg>
<svg class="a" style="left:7.2px;top:269px" width="3" height="4" viewBox="0 0 3 4"><path d="M0.4 0.4L2.4 2L0.4 3.6" stroke="#333" stroke-width="0.8" fill="none"/></svg>
<div class="a" style="left:14px;top:266px;width:47.4px;height:8.3px;background:#f4f4f4;border-top:1px solid #a8a8a8;border-left:0.8px solid #b8b8b8;border-right:0.5px solid #e0e0e0;border-bottom:0.5px solid #e0e0e0"></div>
<div class="a" style="left:64.5px;top:266.8px;width:21.3px;height:9.4px;background:#d0d0d0"></div>
<svg class="a" style="left:67.60px;top:264.00px;overflow:visible" width="18.6" height="12"><text x="0" y="9" font-size="6.3" font-family="Liberation Sans" fill="#8e8e8e" textLength="14.60" lengthAdjust="spacingAndGlyphs" style="white-space:pre">More...</text></svg>
<div class="a" style="left:126.7px;top:42.4px;width:36px;height:7.6px;background:#e4e4e4"></div>
<div class="a" style="left:162.7px;top:42.4px;width:13.5px;height:7.6px;background:#fff"></div>
<svg class="a" style="left:130.40px;top:39.00px;overflow:visible" width="31.1" height="12"><text x="0" y="9" font-size="6.3" font-family="Liberation Mono" stroke="#111" stroke-width="0.25" fill="#111" textLength="27.10" lengthAdjust="spacingAndGlyphs" style="white-space:pre">Start Page</text></svg>
<svg class="a" style="left:167.60px;top:39.00px;overflow:visible" width="6.8" height="12"><text x="0" y="9" font-size="6.3" font-family="Liberation Mono" stroke="#111" stroke-width="0.25" fill="#111" textLength="2.80" lengthAdjust="spacingAndGlyphs" style="white-space:pre">2</text></svg>
<svg class="a" style="left:126px;top:50px" width="573" height="342" viewBox="126 50 573 342">
<defs><pattern id="chk" width="2" height="2" patternUnits="userSpaceOnUse"><rect width="2" height="2" fill="#c8b4b6"/><rect width="1" height="1" fill="#e04444"/><rect x="1" y="1" width="1" height="1" fill="#e04444"/></pattern></defs>
<rect x="126" y="50" width="573" height="342" fill="#000"/>
<path d="M120 122H151.5V252L157 260.5H173L184 271.5V343Q184 345 182 345H120Z" fill="#2a0000" stroke="#a01010" stroke-width="1"/>
<rect x="161" y="45" width="215.5" height="81.7" fill="#545457"/>
<circle cx="180.3" cy="60.2" r="8.5" fill="#6e6e6e"/><circle cx="180.3" cy="60.2" r="3.3" fill="#828282"/>
<circle cx="244.1" cy="61.5" r="8.5" fill="#6e6e6e"/><circle cx="244.1" cy="61.5" r="3.3" fill="#828282"/>
<circle cx="295.9" cy="61.5" r="8.5" fill="#6e6e6e"/><circle cx="295.9" cy="61.5" r="3.3" fill="#828282"/>
<circle cx="359.7" cy="59.6" r="8.5" fill="#6e6e6e"/><circle cx="359.7" cy="59.6" r="3.3" fill="#828282"/>
<circle cx="180.3" cy="113.6" r="8.5" fill="#6e6e6e"/><circle cx="180.3" cy="113.6" r="3.3" fill="#828282"/>
<circle cx="244.1" cy="115.7" r="8.5" fill="#6e6e6e"/><circle cx="244.1" cy="115.7" r="3.3" fill="#828282"/>
<circle cx="295.9" cy="115.7" r="8.5" fill="#6e6e6e"/><circle cx="295.9" cy="115.7" r="3.3" fill="#828282"/>
<circle cx="359.7" cy="113.3" r="8.5" fill="#6e6e6e"/><circle cx="359.7" cy="113.3" r="3.3" fill="#828282"/>
<circle cx="176.4" cy="187" r="8.3" fill="#5f5f5f"/><circle cx="176.4" cy="187" r="3.3" fill="#7c7c7c"/>
<circle cx="257.5" cy="279.5" r="8.3" fill="#5f5f5f"/><circle cx="257.5" cy="279.5" r="3.3" fill="#7c7c7c"/>
<circle cx="396" cy="186.7" r="8.3" fill="#5f5f5f"/><circle cx="396" cy="186.7" r="3.3" fill="#7c7c7c"/>
<circle cx="436.6" cy="152.4" r="8.3" fill="#5f5f5f"/><circle cx="436.6" cy="152.4" r="3.3" fill="#7c7c7c"/>
<circle cx="436.6" cy="215.3" r="8.3" fill="#5f5f5f"/><circle cx="436.6" cy="215.3" r="3.3" fill="#7c7c7c"/>
<circle cx="521.2" cy="237" r="8.3" fill="#5f5f5f"/><circle cx="521.2" cy="237" r="3.3" fill="#7c7c7c"/>
<circle cx="401" cy="287.1" r="8.3" fill="#5f5f5f"/><circle cx="401" cy="287.1" r="3.3" fill="#7c7c7c"/>
<circle cx="434.4" cy="281.2" r="8.3" fill="#5f5f5f"/><circle cx="434.4" cy="281.2" r="3.3" fill="#7c7c7c"/>
<circle cx="577" cy="289" r="8.3" fill="#5f5f5f"/><circle cx="577" cy="289" r="3.3" fill="#7c7c7c"/>
<circle cx="602.2" cy="358.3" r="8.3" fill="#5f5f5f"/><circle cx="602.2" cy="358.3" r="3.3" fill="#7c7c7c"/>
<circle cx="652.3" cy="148.1" r="8.3" fill="#5f5f5f"/><circle cx="652.3" cy="148.1" r="3.3" fill="#7c7c7c"/>
<circle cx="592.3" cy="88.2" r="8.3" fill="#5f5f5f"/><circle cx="592.3" cy="88.2" r="3.3" fill="#7c7c7c"/>
<circle cx="401.5" cy="397" r="8.3" fill="#5f5f5f"/><circle cx="401.5" cy="397" r="3.3" fill="#7c7c7c"/>
<rect x="120" y="44" width="29.30000000000001" height="10" fill="url(#chk)"/>
<rect x="120" y="61.6" width="29.30000000000001" height="11.300000000000004" fill="url(#chk)"/>
<rect x="120" y="80.6" width="29.30000000000001" height="11.200000000000003" fill="url(#chk)"/>
<rect x="120" y="99.8" width="29.30000000000001" height="11.400000000000006" fill="url(#chk)"/>
<rect x="120" y="119.3" width="29.30000000000001" height="11.200000000000003" fill="url(#chk)"/>
<rect x="120" y="98.2" width="30" height="14.2" fill="none" stroke="#c01010" stroke-width="0.8"/>
<ellipse cx="131.5" cy="67.2" rx="4" ry="1.6" fill="#f0c8c8" opacity="0.7"/><ellipse cx="138.5" cy="67.2" rx="1.5" ry="1.2" fill="#e0d0d0" opacity="0.6"/>
<ellipse cx="131.5" cy="86.3" rx="4" ry="1.6" fill="#f0c8c8" opacity="0.7"/><ellipse cx="138.5" cy="86.3" rx="1.5" ry="1.2" fill="#e0d0d0" opacity="0.6"/>
<ellipse cx="131.5" cy="105.5" rx="4" ry="1.6" fill="#f0c8c8" opacity="0.7"/><ellipse cx="138.5" cy="105.5" rx="1.5" ry="1.2" fill="#e0d0d0" opacity="0.6"/>
<text x="122.3" y="134.6" font-size="12.8" fill="#d01818" font-family="Liberation Sans">VDD</text>
<clipPath id="cl1"><rect x="120" y="160" width="31" height="30"/></clipPath><text x="126.0" y="183" font-size="12.5" fill="#c41212" font-family="Liberation Sans" clip-path="url(#cl1)" textLength="28" lengthAdjust="spacingAndGlyphs">D_IO</text>
<text x="122.5" y="260.8" font-size="12.5" fill="#c41212" font-family="Liberation Sans">VDD_</text>
<rect x="120" y="186.8" width="14.5" height="18.8" fill="#c01010"/>
<rect x="120" y="221.8" width="14.5" height="18.8" fill="#c01010"/>
<circle cx="128.5" cy="275.8" r="15.2" fill="#b20c0c"/>
<circle cx="128.5" cy="329.9" r="15.2" fill="#b20c0c"/>
<text x="138.3" y="338.3" font-size="12.5" fill="#cc1414" font-family="Liberation Sans" textLength="45.5" lengthAdjust="spacingAndGlyphs">VDD_IO</text>
<text x="126.5" y="277.5" font-size="4.5" fill="#d09090" font-family="Liberation Sans">x n</text>
<text x="126.5" y="331.5" font-size="4.5" fill="#d09090" font-family="Liberation Sans">x n</text>
<rect x="157.0" y="138.2" width="11.4" height="31.3" fill="url(#chk)"/>
<rect x="176.3" y="138.2" width="11.4" height="31.3" fill="url(#chk)"/>
<rect x="195.6" y="138.2" width="11.4" height="31.3" fill="url(#chk)"/>
<rect x="214.9" y="138.2" width="11.4" height="31.3" fill="url(#chk)"/>
<rect x="234.2" y="138.2" width="11.4" height="31.3" fill="url(#chk)"/>
<rect x="253.5" y="138.2" width="11.4" height="31.3" fill="url(#chk)"/>
<rect x="272.8" y="138.2" width="11.4" height="31.3" fill="#9a9a6c" stroke="#a8a87c" stroke-width="0.6"/>
<rect x="292.1" y="138.2" width="11.4" height="31.3" fill="#9a9a6c" stroke="#a8a87c" stroke-width="0.6"/>
<rect x="311.4" y="138.2" width="11.4" height="31.3" fill="#9a9a6c" stroke="#a8a87c" stroke-width="0.6"/>
<rect x="330.7" y="138.2" width="11.4" height="31.3" fill="#9a9a6c" stroke="#a8a87c" stroke-width="0.6"/>
<rect x="350.0" y="138.2" width="11.4" height="31.3" fill="#9a9a6c" stroke="#a8a87c" stroke-width="0.6"/>
<rect x="369.3" y="138.2" width="11.4" height="31.3" fill="#9a9a6c" stroke="#a8a87c" stroke-width="0.6"/>
<rect x="388.5" y="44" width="31" height="9.5" fill="#9a9a6c"/>
<rect x="388.5" y="62" width="31" height="10.700000000000003" fill="#9a9a6c"/>
<rect x="400" y="66.1" width="19" height="2.4" fill="#c8c890" opacity="0.8"/>
<rect x="388.5" y="81.2" width="31" height="10.700000000000003" fill="#9a9a6c"/>
<rect x="400" y="85.4" width="19" height="2.4" fill="#c8c890" opacity="0.8"/>
<rect x="388.5" y="100.4" width="31" height="10.699999999999989" fill="#9a9a6c"/>
<rect x="400" y="104.5" width="19" height="2.4" fill="#c8c890" opacity="0.8"/>
<rect x="388.5" y="119.6" width="31" height="11.099999999999994" fill="#9a9a6c"/>
<rect x="400" y="123.9" width="19" height="2.4" fill="#c8c890" opacity="0.8"/>
<path d="M201.9 169V237.2L212.9 248.5" stroke="#b81010" stroke-width="3.5" fill="none"/>
<path d="M220.8 169V209.7L236.2 225.4" stroke="#b81010" stroke-width="3.5" fill="none"/>
<circle cx="175.4" cy="279.6" r="8.4" fill="#275a14"/><circle cx="175.4" cy="279.6" r="3.0" fill="#8e9a88"/>
<circle cx="172.7" cy="312.3" r="8.4" fill="#275a14"/><circle cx="172.7" cy="312.3" r="3.0" fill="#8e9a88"/>
<circle cx="212.9" cy="248.5" r="8.3" fill="#275a14"/><circle cx="212.9" cy="248.5" r="2.9" fill="#a09888"/>
<circle cx="236.2" cy="225.4" r="8.3" fill="#275a14"/><circle cx="236.2" cy="225.4" r="2.9" fill="#a09888"/>
<path d="M201.9 237.2L212.9 248.5M220.8 209.7L236.2 225.4" stroke="#b02010" stroke-width="3.3" opacity="0.55" fill="none"/>
<path d="M200.5 238.5L204.5 242.5L212 241.5M200.5 238.5L204 251M219.5 211L223 219L231 217.5M219.5 211L229.5 228" stroke="#c01010" stroke-width="0.6" fill="none"/>
<path d="M283.5,224 L283.5,287 L265.5,305 L265.5,320 L286,340.5 L286,346 L281,351 L277.5,351 L256.5,330 L241,330 L230,341 L230,354 L252.7,376.7 L252.7,381.2 L247.9,386 L242.6,386 L221,364.4 L205.5,364.4 L195.5,374.4 L195.5,400" stroke="#9a9c6c" stroke-width="3.1" fill="none" stroke-linejoin="miter"/>
<path d="M293.3,224 L293.3,291.3 L275.6,309 L275.6,313.7 L298,336.1 L298,350 L286,362 L271.3,362 L250.3,341 L244,341 L240.5,344.5 L240.5,350.3 L262.8,372.6 L262.8,386.6 L255,394.4 L237,394.4 L218,375.4 L210.8,375.4 L205.2,381 L205.2,400" stroke="#9a9c6c" stroke-width="3.1" fill="none" stroke-linejoin="miter"/>
<path d="M321.8,224 L321.8,367.7 L297,392.5" stroke="#9a9c6c" stroke-width="3.1" fill="none" stroke-linejoin="miter"/>
<path d="M331.9,224 L331.9,371.9 L311,392.8" stroke="#9a9c6c" stroke-width="3.1" fill="none" stroke-linejoin="miter"/>
<path d="M360.4,224 L360.4,386.5 L354,393" stroke="#9a9c6c" stroke-width="3.1" fill="none" stroke-linejoin="miter"/>
<path d="M370.6,224 L370.6,400" stroke="#9a9c6c" stroke-width="3.1" fill="none" stroke-linejoin="miter"/>
<rect x="281.7" y="222.5" width="3.6" height="3" fill="#a8a878"/>
<rect x="291.5" y="222.5" width="3.6" height="3" fill="#a8a878"/>
<rect x="320.0" y="222.5" width="3.6" height="3" fill="#a8a878"/>
<rect x="330.09999999999997" y="222.5" width="3.6" height="3" fill="#a8a878"/>
<rect x="358.59999999999997" y="222.5" width="3.6" height="3" fill="#a8a878"/>
<rect x="368.8" y="222.5" width="3.6" height="3" fill="#a8a878"/>
<path d="M469.9,30 L739,299.1" stroke="#9a9c6c" stroke-width="3.1" fill="none" stroke-linejoin="miter"/>
<path d="M483.7,30 L739,285.3" stroke="#9a9c6c" stroke-width="3.1" fill="none" stroke-linejoin="miter"/>
<path d="M419,67.3 L425.4,67.3 L431.8,72.1 L478.8,72.1 L740,333.3" stroke="#9a9c6c" stroke-width="3.1" fill="none" stroke-linejoin="miter"/>
<path d="M419,86.5 L425.4,86.5 L431.8,81.7 L474.9,81.7 L740,346.8" stroke="#9a9c6c" stroke-width="3.1" fill="none" stroke-linejoin="miter"/>
<path d="M419,105.7 L425.4,105.7 L431.8,110 L468.5,110 L646,287.5 L646,400" stroke="#9a9c6c" stroke-width="3.1" fill="none" stroke-linejoin="miter"/>
<path d="M419,125 L425.4,125 L431.8,120.7 L464.3,120.7 L635.6,292 L635.6,400" stroke="#9a9c6c" stroke-width="3.1" fill="none" stroke-linejoin="miter"/>
<line x1="278.6" y1="154.5" x2="331.9" y2="224" stroke="#d8d8a0" stroke-width="0.7"/>
<line x1="297.9" y1="154.5" x2="321.8" y2="224" stroke="#d8d8a0" stroke-width="0.7"/>
<line x1="317.2" y1="154.5" x2="360.4" y2="224" stroke="#d8d8a0" stroke-width="0.7"/>
<line x1="336.5" y1="154.5" x2="370.6" y2="224" stroke="#d8d8a0" stroke-width="0.7"/>
<line x1="355.8" y1="154.5" x2="283.5" y2="224" stroke="#d8d8a0" stroke-width="0.7"/>
<line x1="375.1" y1="154.5" x2="293.3" y2="224" stroke="#d8d8a0" stroke-width="0.7"/>
</svg>
<svg class="a" style="left:709.40px;top:35.00px;overflow:visible" width="31.5" height="12"><text x="0" y="9" font-size="6.6" font-family="Liberation Mono" stroke="#0a0a0a" stroke-width="0.25" fill="#0a0a0a" textLength="27.50" lengthAdjust="spacingAndGlyphs" style="white-space:pre">Visibility</text></svg>
<div class="a" style="left:737.9px;top:41px;width:97.1px;height:2px;background:#b4b4b4"></div>
<div class="a" style="left:840.5px;top:42.7px;width:3.6px;height:1.3px;background:#111"></div>
<svg class="a" style="left:848.5px;top:39.9px" width="4" height="4" viewBox="0 0 4 4"><rect x="1.2" y="0.3" width="2.5" height="2.3" fill="none" stroke="#111" stroke-width="0.8"/><rect x="0.3" y="1.5" width="2.4" height="2.2" fill="#fff" stroke="#111" stroke-width="0.8"/></svg>
<svg class="a" style="left:856.5px;top:39.9px" width="4.2" height="4" viewBox="0 0 4.2 4"><path d="M0.3 0.3L3.9 3.7M3.9 0.3L0.3 3.7" stroke="#111" stroke-width="1"/></svg>
<svg class="a" style="left:705.40px;top:53.00px;overflow:visible" width="50.4" height="12"><text x="0" y="9" font-size="6.2" font-family="Liberation Mono" font-weight="bold" fill="#161616" textLength="46.40" lengthAdjust="spacingAndGlyphs" style="white-space:pre">Global visibility</text></svg>
<div class="a" style="left:755.1px;top:55px;width:32.5px;height:9.6px;background:#e1e1e1;border:0.8px solid #c6c6c6;border-radius:0.8px"></div>
<svg class="a" style="left:768.20px;top:53.00px;overflow:visible" width="9.7" height="12"><text x="0" y="9" font-size="6.2" font-family="Liberation Mono" font-weight="bold" fill="#161616" textLength="5.70" lengthAdjust="spacingAndGlyphs" style="white-space:pre">On</text></svg>
<div class="a" style="left:791.1px;top:55px;width:33.7px;height:9.6px;background:#e1e1e1;border:0.8px solid #c6c6c6;border-radius:0.8px"></div>
<svg class="a" style="left:802.90px;top:53.00px;overflow:visible" width="12.8" height="12"><text x="0" y="9" font-size="6.2" font-family="Liberation Mono" font-weight="bold" fill="#161616" textLength="8.80" lengthAdjust="spacingAndGlyphs" style="white-space:pre">Off</text></svg>
<div class="a" style="left:828.1px;top:55px;width:32.8px;height:9.6px;background:#e1e1e1;border:0.8px solid #c6c6c6;border-radius:0.8px"></div>
<svg class="a" style="left:838.60px;top:53.00px;overflow:visible" width="14.6" height="12"><text x="0" y="9" font-size="6.2" font-family="Liberation Mono" font-weight="bold" fill="#161616" textLength="10.60" lengthAdjust="spacingAndGlyphs" style="white-space:pre">Last</text></svg>
<svg class="a" style="left:705.70px;top:65.00px;overflow:visible" width="14.9" height="12"><text x="0" y="9" font-size="6.2" font-family="Liberation Mono" font-weight="bold" fill="#161616" textLength="10.90" lengthAdjust="spacingAndGlyphs" style="white-space:pre">View</text></svg>
<div class="a" style="left:754.6px;top:67.5px;width:106.9px;height:9.2px;background:#e1e1e1;border:0.8px solid #c6c6c6;border-radius:0.8px"></div>
<svg class="a" style="left:855.2px;top:70.3px" width="4" height="3" viewBox="0 0 4 3"><path d="M0 0.2H3.8L1.9 2.8Z" fill="#111"/></svg>
<svg class="a" style="left:706.80px;top:82.00px;overflow:visible" width="17.4" height="12"><text x="0" y="9" font-size="6.2" font-family="Liberation Mono" font-weight="bold" text-decoration="underline" fill="#161616" textLength="13.40" lengthAdjust="spacingAndGlyphs" style="white-space:pre">Layer</text></svg>
<svg class="a" style="left:784.10px;top:82.00px;overflow:visible" width="14.9" height="12"><text x="0" y="9" font-size="6.2" font-family="Liberation Mono" font-weight="bold" text-decoration="underline" fill="#161616" textLength="10.90" lengthAdjust="spacingAndGlyphs" style="white-space:pre">Plan</text></svg>
<svg class="a" style="left:797.00px;top:82.00px;overflow:visible" width="14.9" height="12"><text x="0" y="9" font-size="6.2" font-family="Liberation Mono" font-weight="bold" text-decoration="underline" fill="#161616" textLength="10.90" lengthAdjust="spacingAndGlyphs" style="white-space:pre">Etch</text></svg>
<svg class="a" style="left:809.90px;top:82.00px;overflow:visible" width="12.2" height="12"><text x="0" y="9" font-size="6.2" font-family="Liberation Mono" font-weight="bold" text-decoration="underline" fill="#161616" textLength="8.20" lengthAdjust="spacingAndGlyphs" style="white-space:pre">Via</text></svg>
<svg class="a" style="left:820.80px;top:82.00px;overflow:visible" width="12.2" height="12"><text x="0" y="9" font-size="6.2" font-family="Liberation Mono" font-weight="bold" text-decoration="underline" fill="#161616" textLength="8.20" lengthAdjust="spacingAndGlyphs" style="white-space:pre">Pin</text></svg>
<svg class="a" style="left:831.60px;top:82.00px;overflow:visible" width="12.2" height="12"><text x="0" y="9" font-size="6.2" font-family="Liberation Mono" font-weight="bold" text-decoration="underline" fill="#161616" textLength="8.20" lengthAdjust="spacingAndGlyphs" style="white-space:pre">Drc</text></svg>
<svg class="a" style="left:843.10px;top:82.00px;overflow:visible" width="12.2" height="12"><text x="0" y="9" font-size="6.2" font-family="Liberation Mono" font-weight="bold" text-decoration="underline" fill="#161616" textLength="8.20" lengthAdjust="spacingAndGlyphs" style="white-space:pre">All</text></svg>
<div class="a" style="left:854.5px;top:92px;width:6.6px;height:113px;background:#e9e9e9"></div>
<div class="a" style="left:854.6px;top:92px;width:6px;height:63.6px;background:#cdcdcd"></div>
<div class="a" style="left:855.5px;top:120.5px;width:4.2px;height:4.2px;background:#fafafa"></div>
<svg class="a" style="left:855.8px;top:86.5px" width="4" height="3" viewBox="0 0 4 3"><path d="M0.3 2.6L2 0.6L3.7 2.6" stroke="#333" stroke-width="0.8" fill="none"/></svg>
<svg class="a" style="left:855.5px;top:207.5px" width="4" height="3" viewBox="0 0 4 3"><path d="M0.3 0.4L2 2.4L3.7 0.4" stroke="#333" stroke-width="0.8" fill="none"/></svg>
<svg class="a" style="left:706.6px;top:93.9px" width="6.4" height="6.2" viewBox="0 0 6.4 6.2"><rect x="0.45" y="0.45" width="5.5" height="5.3" rx="0.8" fill="#fff" stroke="#8a8a8a" stroke-width="0.9"/><path d="M1.4 3.1L2.7 4.5L5 1.6" stroke="#333" stroke-width="0.8" fill="none"/></svg>
<svg class="a" style="left:714.70px;top:90.00px;overflow:visible" width="31.0" height="12"><text x="0" y="9" font-size="6.2" font-family="Liberation Mono" font-weight="bold" fill="#161616" textLength="27.00" lengthAdjust="spacingAndGlyphs" style="white-space:pre">Conductors</text></svg>
<div class="a" style="left:786.45px;top:93.50px;width:6.3px;height:6.3px;background:#fff;border:0.9px solid #8a8a8a;border-radius:1px"></div>
<div class="a" style="left:799.15px;top:93.50px;width:6.3px;height:6.3px;background:#fff;border:0.9px solid #8a8a8a;border-radius:1px"></div>
<div class="a" style="left:810.85px;top:93.50px;width:6.3px;height:6.3px;background:#fff;border:0.9px solid #8a8a8a;border-radius:1px"></div>
<div class="a" style="left:821.55px;top:93.50px;width:6.3px;height:6.3px;background:#fff;border:0.9px solid #8a8a8a;border-radius:1px"></div>
<div class="a" style="left:832.45px;top:93.50px;width:6.3px;height:6.3px;background:#fff;border:0.9px solid #8a8a8a;border-radius:1px"></div>
<div class="a" style="left:843.95px;top:93.50px;width:6.3px;height:6.3px;background:#fff;border:0.9px solid #8a8a8a;border-radius:1px"></div>
<svg class="a" style="left:706.6px;top:103.0px" width="6.4" height="6.2" viewBox="0 0 6.4 6.2"><rect x="0.45" y="0.45" width="5.5" height="5.3" rx="0.8" fill="#fff" stroke="#8a8a8a" stroke-width="0.9"/><path d="M1.4 3.1L2.7 4.5L5 1.6" stroke="#333" stroke-width="0.8" fill="none"/></svg>
<svg class="a" style="left:714.70px;top:99.00px;overflow:visible" width="20.0" height="12"><text x="0" y="9" font-size="6.2" font-family="Liberation Mono" font-weight="bold" fill="#161616" textLength="16.00" lengthAdjust="spacingAndGlyphs" style="white-space:pre">Planes</text></svg>
<div class="a" style="left:786.45px;top:102.60px;width:6.3px;height:6.3px;background:#fff;border:0.9px solid #8a8a8a;border-radius:1px"></div>
<div class="a" style="left:799.15px;top:102.60px;width:6.3px;height:6.3px;background:#fff;border:0.9px solid #8a8a8a;border-radius:1px"></div>
<div class="a" style="left:810.85px;top:102.60px;width:6.3px;height:6.3px;background:#fff;border:0.9px solid #8a8a8a;border-radius:1px"></div>
<div class="a" style="left:821.55px;top:102.60px;width:6.3px;height:6.3px;background:#fff;border:0.9px solid #8a8a8a;border-radius:1px"></div>
<div class="a" style="left:832.45px;top:102.60px;width:6.3px;height:6.3px;background:#fff;border:0.9px solid #8a8a8a;border-radius:1px"></div>
<div class="a" style="left:843.95px;top:102.60px;width:6.3px;height:6.3px;background:#fff;border:0.9px solid #8a8a8a;border-radius:1px"></div>
<svg class="a" style="left:706.6px;top:111.8px" width="6.4" height="6.2" viewBox="0 0 6.4 6.2"><rect x="0.45" y="0.45" width="5.5" height="5.3" rx="0.8" fill="#fff" stroke="#8a8a8a" stroke-width="0.9"/><path d="M1.4 3.1L2.7 4.5L5 1.6" stroke="#333" stroke-width="0.8" fill="none"/></svg>
<svg class="a" style="left:714.70px;top:108.00px;overflow:visible" width="17.5" height="12"><text x="0" y="9" font-size="6.2" font-family="Liberation Mono" font-weight="bold" fill="#161616" textLength="13.50" lengthAdjust="spacingAndGlyphs" style="white-space:pre">Masks</text></svg>
<div class="a" style="left:786.45px;top:111.40px;width:6.3px;height:6.3px;background:#fff;border:0.9px solid #8a8a8a;border-radius:1px"></div>
<div class="a" style="left:799.15px;top:111.40px;width:6.3px;height:6.3px;background:#fff;border:0.9px solid #8a8a8a;border-radius:1px"></div>
<div class="a" style="left:810.85px;top:111.40px;width:6.3px;height:6.3px;background:#fff;border:0.9px solid #8a8a8a;border-radius:1px"></div>
<div class="a" style="left:821.55px;top:111.40px;width:6.3px;height:6.3px;background:#fff;border:0.9px solid #8a8a8a;border-radius:1px"></div>
<div class="a" style="left:832.45px;top:111.40px;width:6.3px;height:6.3px;background:#fff;border:0.9px solid #8a8a8a;border-radius:1px"></div>
<div class="a" style="left:843.95px;top:111.40px;width:6.3px;height:6.3px;background:#fff;border:0.9px solid #8a8a8a;border-radius:1px"></div>
<svg class="a" style="left:706.80px;top:116.00px;overflow:visible" width="31.0" height="12"><text x="0" y="9" font-size="6.2" font-family="Liberation Mono" font-weight="bold" fill="#161616" textLength="27.00" lengthAdjust="spacingAndGlyphs" style="white-space:pre">All Layers</text></svg>
<div class="a" style="left:786.45px;top:119.60px;width:6.3px;height:6.3px;background:#fff;border:0.9px solid #8a8a8a;border-radius:1px"></div>
<div class="a" style="left:799.15px;top:119.60px;width:6.3px;height:6.3px;background:#fff;border:0.9px solid #8a8a8a;border-radius:1px"></div>
<div class="a" style="left:810.85px;top:119.60px;width:6.3px;height:6.3px;background:#fff;border:0.9px solid #8a8a8a;border-radius:1px"></div>
<div class="a" style="left:821.55px;top:119.60px;width:6.3px;height:6.3px;background:#fff;border:0.9px solid #8a8a8a;border-radius:1px"></div>
<div class="a" style="left:832.45px;top:119.60px;width:6.3px;height:6.3px;background:#fff;border:0.9px solid #8a8a8a;border-radius:1px"></div>
<div class="a" style="left:843.95px;top:119.60px;width:6.3px;height:6.3px;background:#fff;border:0.9px solid #8a8a8a;border-radius:1px"></div>
<div class="a" style="left:706.8px;top:128.0px;width:146px;height:0.9px;background:#5a5a5a"></div>
<div class="a" style="left:706.8px;top:129.2px;width:146px;height:0.6px;background:#9a9a9a"></div>
<div class="a" style="left:706px;top:139.5px;width:147px;height:9px;background:#dddddd"></div>
<div class="a" style="left:706px;top:157.4px;width:147px;height:9px;background:#dddddd"></div>
<div class="a" style="left:706px;top:175.5px;width:147px;height:9px;background:#dddddd"></div>
<svg class="a" style="left:706.70px;top:128.00px;overflow:visible" width="11.6" height="12"><text x="0" y="9" font-size="6.2" font-family="Liberation Mono" font-weight="bold" fill="#161616" textLength="7.60" lengthAdjust="spacingAndGlyphs" style="white-space:pre">Top</text></svg>
<div class="a" style="left:786.3px;top:131.3px;width:6.8px;height:6.8px;background:#000;border:0.6px solid #b8b8b8"></div>
<div class="a" style="left:799.0px;top:131.3px;width:6.8px;height:6.8px;background:#ff0000;border:0.6px solid #b8b8b8"></div>
<div class="a" style="left:810.6px;top:131.3px;width:6.8px;height:6.8px;background:#008000;border:0.6px solid #b8b8b8"></div>
<div class="a" style="left:821.4px;top:131.3px;width:6.8px;height:6.8px;background:#ff0000;border:0.6px solid #b8b8b8"></div>
<div class="a" style="left:832.2px;top:131.3px;width:6.8px;height:6.8px;background:#000;border:0.6px solid #b8b8b8"></div>
<div class="a" style="left:843.95px;top:131.50px;width:6.3px;height:6.3px;background:#fff;border:0.9px solid #8a8a8a;border-radius:1px"></div>
<svg class="a" style="left:706.70px;top:137.00px;overflow:visible" width="9.0" height="12"><text x="0" y="9" font-size="6.2" font-family="Liberation Mono" font-weight="bold" fill="#161616" textLength="5.00" lengthAdjust="spacingAndGlyphs" style="white-space:pre">L2</text></svg>
<div class="a" style="left:786.3px;top:140.3px;width:6.8px;height:6.8px;background:#000;border:0.6px solid #b8b8b8"></div>
<div class="a" style="left:799.0px;top:140.3px;width:6.8px;height:6.8px;background:#000;border:0.6px solid #b8b8b8"></div>
<div class="a" style="left:810.6px;top:140.3px;width:6.8px;height:6.8px;background:#000;border:0.6px solid #b8b8b8"></div>
<div class="a" style="left:821.4px;top:140.3px;width:6.8px;height:6.8px;background:#000;border:0.6px solid #b8b8b8"></div>
<div class="a" style="left:832.2px;top:140.3px;width:6.8px;height:6.8px;background:#000;border:0.6px solid #b8b8b8"></div>
<div class="a" style="left:843.95px;top:140.50px;width:6.3px;height:6.3px;background:#fff;border:0.9px solid #8a8a8a;border-radius:1px"></div>
<svg class="a" style="left:706.70px;top:146.00px;overflow:visible" width="9.0" height="12"><text x="0" y="9" font-size="6.2" font-family="Liberation Mono" font-weight="bold" fill="#161616" textLength="5.00" lengthAdjust="spacingAndGlyphs" style="white-space:pre">L3</text></svg>
<div class="a" style="left:786.3px;top:149.3px;width:6.8px;height:6.8px;background:#000;border:0.6px solid #b8b8b8"></div>
<div class="a" style="left:799.0px;top:149.3px;width:6.8px;height:6.8px;background:#000;border:0.6px solid #b8b8b8"></div>
<div class="a" style="left:810.6px;top:149.3px;width:6.8px;height:6.8px;background:#000;border:0.6px solid #b8b8b8"></div>
<div class="a" style="left:821.4px;top:149.3px;width:6.8px;height:6.8px;background:#000;border:0.6px solid #b8b8b8"></div>
<div class="a" style="left:832.2px;top:149.3px;width:6.8px;height:6.8px;background:#000;border:0.6px solid #b8b8b8"></div>
<div class="a" style="left:843.95px;top:149.50px;width:6.3px;height:6.3px;background:#fff;border:0.9px solid #8a8a8a;border-radius:1px"></div>
<svg class="a" style="left:706.70px;top:155.00px;overflow:visible" width="9.0" height="12"><text x="0" y="9" font-size="6.2" font-family="Liberation Mono" font-weight="bold" fill="#161616" textLength="5.00" lengthAdjust="spacingAndGlyphs" style="white-space:pre">L4</text></svg>
<div class="a" style="left:786.3px;top:158.3px;width:6.8px;height:6.8px;background:#000;border:0.6px solid #b8b8b8"></div>
<div class="a" style="left:799.0px;top:158.3px;width:6.8px;height:6.8px;background:#000;border:0.6px solid #b8b8b8"></div>
<div class="a" style="left:810.6px;top:158.3px;width:6.8px;height:6.8px;background:#000;border:0.6px solid #b8b8b8"></div>
<div class="a" style="left:821.4px;top:158.3px;width:6.8px;height:6.8px;background:#000;border:0.6px solid #b8b8b8"></div>
<div class="a" style="left:832.2px;top:158.3px;width:6.8px;height:6.8px;background:#000;border:0.6px solid #b8b8b8"></div>
<div class="a" style="left:843.95px;top:158.50px;width:6.3px;height:6.3px;background:#fff;border:0.9px solid #8a8a8a;border-radius:1px"></div>
<svg class="a" style="left:706.70px;top:164.00px;overflow:visible" width="9.0" height="12"><text x="0" y="9" font-size="6.2" font-family="Liberation Mono" font-weight="bold" fill="#161616" textLength="5.00" lengthAdjust="spacingAndGlyphs" style="white-space:pre">L5</text></svg>
<div class="a" style="left:786.3px;top:167.3px;width:6.8px;height:6.8px;background:#000;border:0.6px solid #b8b8b8"></div>
<div class="a" style="left:799.0px;top:167.3px;width:6.8px;height:6.8px;background:#000;border:0.6px solid #b8b8b8"></div>
<div class="a" style="left:810.6px;top:167.3px;width:6.8px;height:6.8px;background:#000;border:0.6px solid #b8b8b8"></div>
<div class="a" style="left:821.4px;top:167.3px;width:6.8px;height:6.8px;background:#000;border:0.6px solid #b8b8b8"></div>
<div class="a" style="left:832.2px;top:167.3px;width:6.8px;height:6.8px;background:#000;border:0.6px solid #b8b8b8"></div>
<div class="a" style="left:843.95px;top:167.50px;width:6.3px;height:6.3px;background:#fff;border:0.9px solid #8a8a8a;border-radius:1px"></div>
<svg class="a" style="left:706.70px;top:173.00px;overflow:visible" width="19.9" height="12"><text x="0" y="9" font-size="6.2" font-family="Liberation Mono" font-weight="bold" fill="#161616" textLength="15.90" lengthAdjust="spacingAndGlyphs" style="white-space:pre">Bottom</text></svg>
<div class="a" style="left:786.3px;top:176.3px;width:6.8px;height:6.8px;background:#000;border:0.6px solid #b8b8b8"></div>
<div class="a" style="left:799.0px;top:176.3px;width:6.8px;height:6.8px;background:#000;border:0.6px solid #b8b8b8"></div>
<div class="a" style="left:810.6px;top:176.3px;width:6.8px;height:6.8px;background:#000;border:0.6px solid #b8b8b8"></div>
<div class="a" style="left:821.4px;top:176.3px;width:6.8px;height:6.8px;background:#000;border:0.6px solid #b8b8b8"></div>
<div class="a" style="left:832.2px;top:176.3px;width:6.8px;height:6.8px;background:#000;border:0.6px solid #b8b8b8"></div>
<div class="a" style="left:843.95px;top:176.50px;width:6.3px;height:6.3px;background:#fff;border:0.9px solid #8a8a8a;border-radius:1px"></div>
<svg class="a" style="left:706.70px;top:182.00px;overflow:visible" width="33.3" height="12"><text x="0" y="9" font-size="6.2" font-family="Liberation Mono" font-weight="bold" fill="#161616" textLength="29.30" lengthAdjust="spacingAndGlyphs" style="white-space:pre">Through All</text></svg>
<div class="a" style="left:786.3px;top:185.3px;width:6.8px;height:6.8px;background:#000;border:0.6px solid #b8b8b8"></div>
<div class="a" style="left:832.2px;top:185.3px;width:6.8px;height:6.8px;background:#000;border:0.6px solid #b8b8b8"></div>
<div class="a" style="left:843.95px;top:185.50px;width:6.3px;height:6.3px;background:#fff;border:0.9px solid #8a8a8a;border-radius:1px"></div>
<div class="a" style="left:707.2px;top:194.2px;width:145.4px;height:1.4px;background:#8a8a8a"></div>
<svg class="a" style="left:739.10px;top:194.00px;overflow:visible" width="85.5" height="12"><text x="0" y="9" font-size="6.2" font-family="Liberation Mono" font-weight="bold" text-decoration="underline" fill="#161616" textLength="81.50" lengthAdjust="spacingAndGlyphs" style="white-space:pre">Class/Subclass (user selected)</text></svg>
<div class="a" style="left:706.7px;top:205.6px;width:146px;height:6.9px;background:#dddddd"></div>
<svg class="a" style="left:706.70px;top:202.00px;overflow:visible" width="66.0" height="12"><text x="0" y="9" font-size="6.2" font-family="Liberation Mono" font-weight="bold" fill="#161616" textLength="62.00" lengthAdjust="spacingAndGlyphs" style="white-space:pre">Ref Des/Assembly_Bottom</text></svg>
<div class="a" style="left:842.3px;top:206.2px;width:6.8px;height:6.3px;background:#000;border:0.6px solid #b8b8b8"></div>
<div class="a" style="left:746.2px;top:215.7px;width:5.6px;height:5.8px;background:#fff;border:0.9px solid #8a8a8a;border-radius:1px"></div>
<svg class="a" style="left:754.40px;top:212.00px;overflow:visible" width="68.8" height="12"><text x="0" y="9" font-size="6.2" font-family="Liberation Mono" font-weight="bold" fill="#161616" textLength="64.80" lengthAdjust="spacingAndGlyphs" style="white-space:pre">Enable layer select mode</text></svg>
<svg class="a" style="left:709.20px;top:226.00px;overflow:visible" width="23.0" height="12"><text x="0" y="9" font-size="6.6" font-family="Liberation Mono" stroke="#0a0a0a" stroke-width="0.25" fill="#0a0a0a" textLength="19.00" lengthAdjust="spacingAndGlyphs" style="white-space:pre">Options</text></svg>
<div class="a" style="left:729.2px;top:232px;width:106.2px;height:2px;background:#b4b4b4"></div>
<div class="a" style="left:840.2px;top:233.4px;width:3.6px;height:1.3px;background:#111"></div>
<svg class="a" style="left:848.2px;top:230.6px" width="4" height="4" viewBox="0 0 4 4"><rect x="1.2" y="0.3" width="2.5" height="2.3" fill="none" stroke="#111" stroke-width="0.8"/><rect x="0.3" y="1.5" width="2.4" height="2.2" fill="#fff" stroke="#111" stroke-width="0.8"/></svg>
<svg class="a" style="left:856.2px;top:230.6px" width="4.2" height="4" viewBox="0 0 4.2 4"><path d="M0.3 0.3L3.9 3.7M3.9 0.3L0.3 3.7" stroke="#111" stroke-width="1"/></svg>
<div class="a" style="left:702.4px;top:237.3px;width:170px;height:218.5px;border:1px solid #c9c9c9;border-left-color:#a8a8a8"></div>
<svg class="a" style="left:706.10px;top:250.00px;overflow:visible" width="61.8" height="12"><text x="0" y="9" font-size="6.5" font-family="Liberation Sans" fill="#262626" textLength="57.80" lengthAdjust="spacingAndGlyphs" style="white-space:pre">Active Class and Subclass:</text></svg>
<div class="a" style="left:719px;top:267.3px;width:67.8px;height:9.4px;background:#e1e1e1;border:0.8px solid #d0d0d0"></div>
<svg class="a" style="left:720.90px;top:265.00px;overflow:visible" width="14.2" height="12"><text x="0" y="9" font-size="6.5" font-family="Liberation Sans" fill="#262626" textLength="10.20" lengthAdjust="spacingAndGlyphs" style="white-space:pre">Etch</text></svg>
<svg class="a" style="left:780.6px;top:270.8px" width="4" height="3" viewBox="0 0 4 3"><path d="M0.3 0.5L2 2.4L3.7 0.5" stroke="#555" stroke-width="0.6" fill="none"/></svg>
<div class="a" style="left:709.8px;top:284.9px;width:6.2px;height:6px;background:#ff0000;border:0.9px solid #8a8a8a"></div>
<div class="a" style="left:719px;top:283.1px;width:67.8px;height:9.4px;background:#fff;border:0.8px solid #bcbcbc;border-radius:1px"></div>
<div class="a" style="left:721.1px;top:285.8px;width:2.9px;height:4px;background:#a00000;border:0.5px solid #555"></div>
<svg class="a" style="left:726.40px;top:281.00px;overflow:visible" width="12.5" height="12"><text x="0" y="9" font-size="6.5" font-family="Liberation Sans" fill="#262626" textLength="8.50" lengthAdjust="spacingAndGlyphs" style="white-space:pre">Top</text></svg>
<svg class="a" style="left:780.6px;top:286.7px" width="4" height="3" viewBox="0 0 4 3"><path d="M0.3 0.5L2 2.4L3.7 0.5" stroke="#555" stroke-width="0.6" fill="none"/></svg>
<svg class="a" style="left:6.90px;top:393.00px;overflow:visible" width="23.2" height="12"><text x="0" y="9" font-size="6.6" font-family="Liberation Mono" stroke="#0a0a0a" stroke-width="0.25" fill="#0a0a0a" textLength="19.20" lengthAdjust="spacingAndGlyphs" style="white-space:pre">Command</text></svg>
<div class="a" style="left:27.1px;top:400px;width:471.9px;height:2px;background:#b4b4b4"></div>
<div class="a" style="left:504.2px;top:401.2px;width:3.6px;height:1.3px;background:#111"></div>
<svg class="a" style="left:512.2px;top:398.4px" width="4" height="4" viewBox="0 0 4 4"><rect x="1.2" y="0.3" width="2.5" height="2.3" fill="none" stroke="#111" stroke-width="0.8"/><rect x="0.3" y="1.5" width="2.4" height="2.2" fill="#fff" stroke="#111" stroke-width="0.8"/></svg>
<svg class="a" style="left:520.2px;top:398.4px" width="4.2" height="4" viewBox="0 0 4.2 4"><path d="M0.3 0.3L3.9 3.7M3.9 0.3L0.3 3.7" stroke="#111" stroke-width="1"/></svg>
<div class="a" style="left:4.4px;top:408.4px;width:520.6px;height:32px;background:#fff;border:1px solid #c4c4c4;border-top-color:#a8a8a8;border-left-color:#a8a8a8"></div>
<div class="a" style="left:5.4px;top:409.4px;width:511px;height:30px;overflow:hidden">
<div class="a" style="left:-5.4px;top:-409.4px"><svg class="a" style="left:6.00px;top:405.00px;overflow:visible" width="149.3" height="11"><text x="0" y="8" font-size="5.7" font-family="Liberation Mono" font-weight="bold" fill="#151515" textLength="145.26" lengthAdjust="spacingAndGlyphs" style="white-space:pre">Pick DONE/NEXT or pick the first pin of the next swap.</text></svg></div>
<div class="a" style="left:-5.4px;top:-409.4px"><svg class="a" style="left:6.00px;top:411.00px;overflow:visible" width="71.2" height="11"><text x="0" y="8" font-size="5.7" font-family="Liberation Mono" font-weight="bold" fill="#151515" textLength="67.25" lengthAdjust="spacingAndGlyphs" style="white-space:pre">last pick:  77.800 42.400</text></svg></div>
<div class="a" style="left:-5.4px;top:-409.4px"><svg class="a" style="left:6.00px;top:417.00px;overflow:visible" width="165.4" height="11"><text x="0" y="8" font-size="5.7" font-family="Liberation Mono" font-weight="bold" fill="#151515" textLength="161.40" lengthAdjust="spacingAndGlyphs" style="white-space:pre">Pick a pin you wish to swap from those that are highlighted.</text></svg></div>
<div class="a" style="left:-5.4px;top:-409.4px"><svg class="a" style="left:6.00px;top:423.00px;overflow:visible" width="71.2" height="11"><text x="0" y="8" font-size="5.7" font-family="Liberation Mono" font-weight="bold" fill="#151515" textLength="67.25" lengthAdjust="spacingAndGlyphs" style="white-space:pre">last pick:  77.100 42.550</text></svg></div>
<div class="a" style="left:-5.4px;top:-409.4px"><svg class="a" style="left:6.00px;top:429.00px;overflow:visible" width="149.3" height="11"><text x="0" y="8" font-size="5.7" font-family="Liberation Mono" font-weight="bold" fill="#151515" textLength="145.26" lengthAdjust="spacingAndGlyphs" style="white-space:pre">Pick DONE/NEXT or pick the first pin of the next swap.</text></svg></div>
</div>
<div class="a" style="left:517px;top:409.4px;width:7px;height:30px;background:#f0f0f0"></div>
<div class="a" style="left:517.6px;top:424.7px;width:6px;height:7.6px;background:#cdcdcd"></div>
<svg class="a" style="left:518.6px;top:412.3px" width="4" height="3" viewBox="0 0 4 3"><path d="M0.3 2.6L2 0.6L3.7 2.6" stroke="#333" stroke-width="0.8" fill="none"/></svg>
<svg class="a" style="left:518.6px;top:434.2px" width="4" height="3" viewBox="0 0 4 3"><path d="M0.3 0.4L2 2.4L3.7 0.4" stroke="#333" stroke-width="0.8" fill="none"/></svg>
<div class="a" style="left:4.2px;top:443.2px;width:520.8px;height:9.2px;background:#fff;border:1px solid #c4c4c4;border-top-color:#a8a8a8;border-left-color:#a8a8a8"></div>
<div class="a" style="left:32px;top:443.2px;width:0.9px;height:9.2px;background:#8a8a8a"></div>
<div class="a" style="left:5.2px;top:444.2px;width:26.5px;height:7.4px;overflow:hidden"><div class="a" style="left:-5.2px;top:-444.2px"><svg class="a" style="left:2.40px;top:442.00px;overflow:visible" width="29.7" height="11"><text x="0" y="8" font-size="5.7" font-family="Liberation Mono" font-weight="bold" fill="#1a1a1a" textLength="25.70" lengthAdjust="spacingAndGlyphs" style="white-space:pre">Command &gt;</text></svg></div></div>
<svg class="a" style="left:519.3px;top:446.6px" width="4" height="3" viewBox="0 0 4 3"><path d="M0.3 0.5L2 2.4L3.7 0.5" stroke="#555" stroke-width="0.6" fill="none"/></svg>
<svg class="a" style="left:538.40px;top:393.00px;overflow:visible" width="14.1" height="12"><text x="0" y="9" font-size="6.6" font-family="Liberation Mono" stroke="#0a0a0a" stroke-width="0.25" fill="#0a0a0a" textLength="10.10" lengthAdjust="spacingAndGlyphs" style="white-space:pre">View</text></svg>
<div class="a" style="left:549.5px;top:400px;width:121.5px;height:2px;background:#b4b4b4"></div>
<div class="a" style="left:677.3px;top:401.2px;width:3.6px;height:1.3px;background:#111"></div>
<svg class="a" style="left:685.3px;top:398.4px" width="4" height="4" viewBox="0 0 4 4"><rect x="1.2" y="0.3" width="2.5" height="2.3" fill="none" stroke="#111" stroke-width="0.8"/><rect x="0.3" y="1.5" width="2.4" height="2.2" fill="#fff" stroke="#111" stroke-width="0.8"/></svg>
<svg class="a" style="left:693.3px;top:398.4px" width="4.2" height="4" viewBox="0 0 4.2 4"><path d="M0.3 0.3L3.9 3.7M3.9 0.3L0.3 3.7" stroke="#111" stroke-width="1"/></svg>
<div class="a" style="left:532.7px;top:406.6px;width:165.8px;height:48px;background:#000"></div>
<div class="a" style="left:648px;top:404.2px;width:50px;height:1.3px;background:#3a3a3a"></div>
<div class="a" style="left:648px;top:455.3px;width:48px;height:1.2px;background:#3a3a3a"></div>
<svg class="a" style="left:532.7px;top:406.6px" width="166" height="48" viewBox="532.7 406.6 166 48"><rect x="557.6" y="408.1" width="116.7" height="44.3" rx="3" fill="none" stroke="#b0b0b0" stroke-width="0.9"/><rect x="583.5" y="428.2" width="6.8" height="8.8" rx="0.8" fill="none" stroke="#a8a8a8" stroke-width="0.8"/><rect x="584" y="432.4" width="12.4" height="7.5" rx="0.8" fill="none" stroke="#a8a8a8" stroke-width="0.8"/></svg>
<svg class="a" style="left:1.00px;top:457.00px;overflow:visible" width="14.4" height="11"><text x="0" y="8" font-size="5.8" font-family="Liberation Mono" font-weight="bold" fill="#161616" textLength="10.40" lengthAdjust="spacingAndGlyphs" style="white-space:pre">Idle</text></svg>
<div class="a" style="left:76.0px;top:457.7px;width:72.5px;height:10.3px;background:#00ff00"></div>
<div class="a" style="left:223.5px;top:457px;width:0.8px;height:11px;background:#dcdcdc"></div>
<div class="a" style="left:298.5px;top:457px;width:0.8px;height:11px;background:#dcdcdc"></div>
<div class="a" style="left:373.5px;top:457px;width:0.8px;height:11px;background:#dcdcdc"></div>
<div class="a" style="left:489.2px;top:457px;width:0.8px;height:11px;background:#dcdcdc"></div>
<div class="a" style="left:564.1px;top:457px;width:0.8px;height:11px;background:#dcdcdc"></div>
<div class="a" style="left:639.9px;top:457px;width:0.8px;height:11px;background:#dcdcdc"></div>
<div class="a" style="left:714.0px;top:457px;width:0.8px;height:11px;background:#dcdcdc"></div>
<svg class="a" style="left:225.80px;top:457.00px;overflow:visible" width="12.4" height="11"><text x="0" y="8" font-size="5.8" font-family="Liberation Mono" font-weight="bold" fill="#161616" textLength="8.40" lengthAdjust="spacingAndGlyphs" style="white-space:pre">Top</text></svg>
<svg class="a" style="left:301.60px;top:457.00px;overflow:visible" width="41.6" height="11"><text x="0" y="8" font-size="5.8" font-family="Liberation Mono" fill="#161616" textLength="37.60" lengthAdjust="spacingAndGlyphs" style="white-space:pre">77.900, 41.000</text></svg>
<div class="a" style="left:376.6px;top:457.6px;width:10.2px;height:10.2px;background:#e3e3e3;border:0.8px solid #c8c8c8;border-radius:0.8px"></div>
<svg class="a" style="left:378.90px;top:456.00px;overflow:visible" width="9.6" height="11"><text x="0" y="8" font-size="5.4" font-family="Liberation Mono" font-weight="bold" fill="#161616" textLength="5.60" lengthAdjust="spacingAndGlyphs" style="white-space:pre">mm</text></svg>
<div class="a" style="left:390.6px;top:457.6px;width:8.9px;height:10.2px;background:#e3e3e3;border:0.8px solid #c8c8c8;border-radius:0.8px"></div>
<svg class="a" style="left:393.65px;top:456.00px;overflow:visible" width="6.8" height="11"><text x="0" y="8" font-size="5.4" font-family="Liberation Mono" font-weight="bold" fill="#161616" textLength="2.80" lengthAdjust="spacingAndGlyphs" style="white-space:pre">P</text></svg>
<div class="a" style="left:403.3px;top:457.6px;width:9.7px;height:10.2px;background:#e3e3e3;border:0.8px solid #c8c8c8;border-radius:0.8px"></div>
<svg class="a" style="left:406.75px;top:456.00px;overflow:visible" width="6.8" height="11"><text x="0" y="8" font-size="5.4" font-family="Liberation Mono" font-weight="bold" fill="#161616" textLength="2.80" lengthAdjust="spacingAndGlyphs" style="white-space:pre">A</text></svg>
<svg class="a" style="left:566.60px;top:457.00px;overflow:visible" width="14.5" height="11"><text x="0" y="8" font-size="5.8" font-family="Liberation Mono" font-weight="bold" fill="#161616" textLength="10.50" lengthAdjust="spacingAndGlyphs" style="white-space:pre">None</text></svg>
<svg class="a" style="left:642.30px;top:457.00px;overflow:visible" width="11.5" height="11"><text x="0" y="8" font-size="5.8" font-family="Liberation Mono" fill="#777" textLength="7.50" lengthAdjust="spacingAndGlyphs" style="white-space:pre">N/A</text></svg>
<div class="a" style="left:715.8px;top:457.7px;width:72.9px;height:10.3px;background:#ffff00"></div>
<svg class="a" style="left:718.00px;top:457.00px;overflow:visible" width="12.5" height="11"><text x="0" y="8" font-size="5.8" font-family="Liberation Mono" font-weight="bold" fill="#161616" textLength="8.50" lengthAdjust="spacingAndGlyphs" style="white-space:pre">DRC</text></svg>
<svg class="a" style="left:791.80px;top:457.00px;overflow:visible" width="6.7" height="11"><text x="0" y="8" font-size="5.8" font-family="Liberation Mono" fill="#161616" textLength="2.70" lengthAdjust="spacingAndGlyphs" style="white-space:pre">0</text></svg>
<svg class="a" style="left:780px;top:370px" width="85" height="25" viewBox="780 370 85 25"><rect x="796.5" y="377.3" width="70" height="12" fill="#ffffff" stroke="#dde3ee" stroke-width="0.8"/><g transform="rotate(-14 792 382.3)"><rect x="785.8" y="376.3" width="12.4" height="12" rx="2" fill="#f2561d"/><path d="M795.3 379.3Q792.5 377.8 789.8 379Q787.8 380.6 790 382.2Q794.8 383.2 794.4 385Q792.8 387.3 788.6 385.8" stroke="#fff" stroke-width="2" fill="none"/></g><path d="M802 380.3H808V384.3H802ZM805 378.8V386.5" stroke="#1d6fe0" stroke-width="1.1" fill="none"/><circle cx="814.7" cy="381.8" r="0.9" fill="#1d6fe0"/><path d="M817.2 382.5L816.8 384.6" stroke="#1d6fe0" stroke-width="1.1"/><rect x="825.6" y="378.5" width="2.3" height="5" rx="1.1" fill="#1d6fe0"/><path d="M824.2 382.3Q826.7 386 829.2 382.3M826.7 384.6V386.6" stroke="#1d6fe0" stroke-width="0.9" fill="none"/><rect x="834.3" y="379.6" width="6.5" height="5.4" fill="none" stroke="#1d6fe0" stroke-width="1"/><path d="M835.5 381.5H839.6M835.5 383.2H839.6" stroke="#1d6fe0" stroke-width="0.7"/><path d="M845.3 380L847.2 379H850.4L852.3 380L851.5 382H850.6V386H847V382H846.1Z" fill="#1d6fe0"/><rect x="856.5" y="379.3" width="2.7" height="2.7" rx="0.6" fill="#1d6fe0"/><rect x="860.2" y="379.3" width="2.7" height="2.7" rx="0.6" fill="#1d6fe0"/><rect x="856.5" y="383" width="2.7" height="2.7" rx="0.6" fill="#1d6fe0"/><rect x="860.2" y="383" width="2.7" height="2.7" rx="0.6" fill="#1d6fe0"/></svg>
<svg class="a" style="left:700px;top:436px;overflow:visible" width="160" height="26" viewBox="700 436 160 26"><text x="712.6" y="455.4" font-size="14" font-family="Liberation Sans" textLength="66.6" lengthAdjust="spacingAndGlyphs" fill="#f0f0f0" stroke="#7c7c7c" stroke-width="0.55">CSDN @</text></svg>
<svg class="a" style="left:770px;top:438px;overflow:visible" width="85" height="24" viewBox="770 438 85 24"><path d="M777 444.5L778.5 446M775.8 447.3H788.5M779 448L787.5 457.5M786.5 448L776.5 457.5M791 446V454.5M794.2 441.8V458L792.6 457M804.8 442.5V458.3L802.8 457.3M801.5 445.8L796.6 454.5M809.5 447L813.2 453.8M816.6 458.5V443.9H830.2V458.3L828.6 457.5M819.5 447H827.5M820 450.3H827V455H820ZM834 442.6L835.3 445.2M839.2 442.2L839.9 444.9M845.5 442.3L844.3 445M833.2 449V447H848.8V449M837 449.7H845.3L842.3 451.6M832 452.7H849M841.6 451.6V458.6L839.6 457.8" stroke="#858585" stroke-width="1.6" fill="none" stroke-linecap="butt" stroke-linejoin="miter"/><path d="M777 444.5L778.5 446M775.8 447.3H788.5M779 448L787.5 457.5M786.5 448L776.5 457.5M791 446V454.5M794.2 441.8V458L792.6 457M804.8 442.5V458.3L802.8 457.3M801.5 445.8L796.6 454.5M809.5 447L813.2 453.8M816.6 458.5V443.9H830.2V458.3L828.6 457.5M819.5 447H827.5M820 450.3H827V455H820ZM834 442.6L835.3 445.2M839.2 442.2L839.9 444.9M845.5 442.3L844.3 445M833.2 449V447H848.8V449M837 449.7H845.3L842.3 451.6M832 452.7H849M841.6 451.6V458.6L839.6 457.8" stroke="#e8e8e8" stroke-width="0.5" fill="none" stroke-linecap="butt" stroke-linejoin="miter"/></svg>
</body></html>
